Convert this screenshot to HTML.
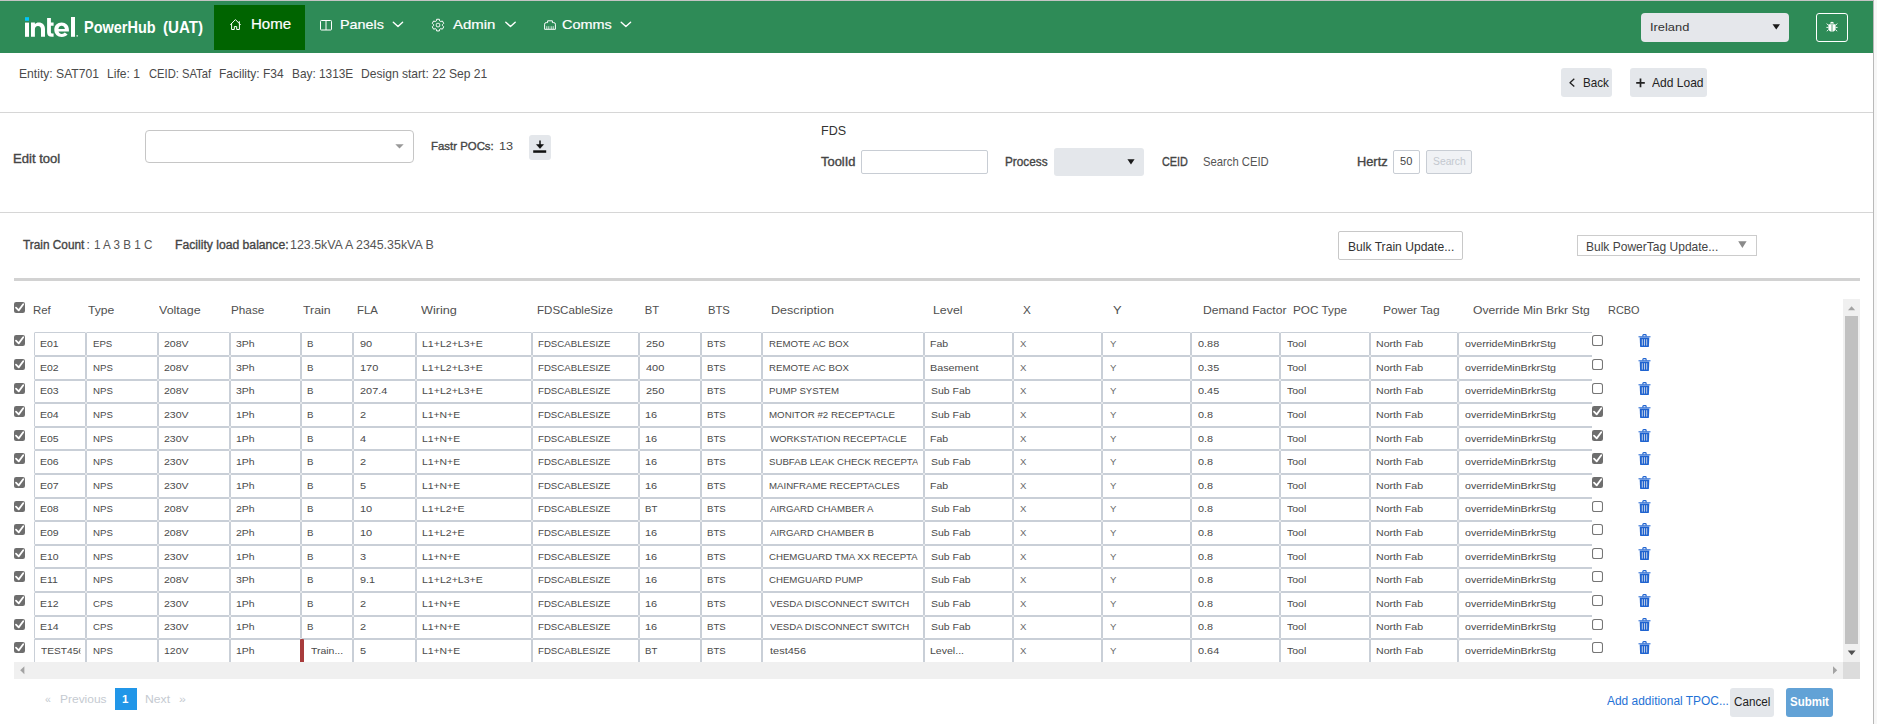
<!DOCTYPE html>
<html><head><meta charset="utf-8">
<style>
html,body{margin:0;padding:0;}
body{width:1877px;height:724px;overflow:hidden;position:relative;background:#fff;font-family:"Liberation Sans",sans-serif;}
.a{position:absolute;box-sizing:border-box;}
.t{position:absolute;white-space:pre;line-height:1;transform-origin:0 0;}
.cell{position:absolute;box-sizing:border-box;border:1px solid #c9cfd7;border-radius:1px;background:#fff;}
.cb{position:absolute;width:10.5px;height:10.5px;box-sizing:border-box;border-radius:2px;}
.cb.on{background:#6e6e6e;}
.cb.on::after{content:"";position:absolute;left:2.2px;top:4.6px;width:6px;height:3px;border-left:1.6px solid #fff;border-bottom:1.6px solid #fff;transform:rotate(-50deg);transform-origin:0 0;}
.cb.off{border:1px solid #767676;background:#fff;}
.ic{position:absolute;overflow:visible;}
</style></head><body>
<!-- page right edge -->
<div class="a" style="left:1873px;top:0;width:1px;height:724px;background:#b9b9b9"></div>
<div class="a" style="left:1874px;top:0;width:3px;height:724px;background:#f7f7f7"></div>
<!-- navbar -->
<div class="a" style="left:0;top:0;width:1873px;height:1px;background:#c4c4c4"></div>
<div class="a" style="left:0;top:1px;width:1873px;height:52px;background:#2e8b57"></div>
<div class="a" style="left:214px;top:5px;width:91px;height:45px;background:#006400"></div>
<svg class="ic" style="left:0;top:0" width="1877" height="60" viewBox="0 0 1877 60">
  <rect x="25" y="17.2" width="4" height="3.6" fill="#00c7fd"/>
  <g fill="#fff">
    <rect x="25" y="22.6" width="4" height="14.2"/>
    <path d="M31 36.8V22.6H34.9V24.1C35.8 23 37.1 22.4 38.7 22.4C42.6 22.4 45 24.9 45 28.9V36.8H41V29.5C41 27.2 40 25.9 38 25.9C36 25.9 34.9 27.3 34.9 29.5V36.8Z"/>
    <path d="M47.1 18.1H50.9V22.6H53.6V25.7H50.9V31.9C50.9 33.1 51.5 33.6 52.6 33.6H53.6V36.8H52C48.8 36.8 47.1 35.2 47.1 32.2Z"/>
    <path fill-rule="evenodd" d="M68.9 31.6H58.5C59 33.2 60.2 34 61.8 34C63 34 64 33.5 64.8 32.6L67.6 34.6C66.3 36 64.3 36.9 61.8 36.9C57.4 36.9 54.3 33.9 54.3 29.7C54.3 25.5 57.4 22.5 61.6 22.5C65.8 22.5 68.9 25.5 68.9 29.7ZM58.4 28.9H64.9C64.5 26.9 63.2 25.8 61.6 25.8C60 25.8 58.8 26.9 58.4 28.9Z"/>
    <rect x="71" y="17" width="4" height="19.8"/>
    <circle cx="77.2" cy="35.8" r="0.9" fill="#cfe3d6"/>
  </g>
  <g fill="none" stroke="#fff" stroke-width="1" stroke-linejoin="round">
    <!-- house -->
    <path d="M230.3 24.8L235.45 19.6L240.6 24.8M231.6 23.4V29.5H234.3V26.6H236.7V29.5H239.4V23.4M239.3 23.2V21.2" />
    <!-- panels -->
    <rect x="320.5" y="20.5" width="11" height="9.5" rx="0.8"/>
    <path d="M326 20.5V30"/>
    <!-- gear -->
    <path d="M436.21 21.08 L436.65 19.25 L439.35 19.25 L439.79 21.08 L440.59 21.54 L442.39 21.01 L443.74 23.35 L442.38 24.64 L442.38 25.56 L443.74 26.85 L442.39 29.19 L440.59 28.66 L439.79 29.12 L439.35 30.95 L436.65 30.95 L436.21 29.12 L435.41 28.66 L433.61 29.19 L432.26 26.85 L433.62 25.56 L433.62 24.64 L432.26 23.35 L433.61 21.01 L435.41 21.54Z" stroke-width="1"/>
    <rect x="436.3" y="23.4" width="3.4" height="3.4" rx="1"/>
    <!-- comms -->
    <path d="M544.6 29.3V24.2Q544.6 22.6 546.3 22.6H547.6V20.8H552.4V22.6H553.7Q555.4 22.6 555.4 24.2V29.3Z"/>
    <path d="M546.8 26.2V29M548.8 26.2V29M551.2 26.2V29M553.2 26.2V29" stroke-width="0.8"/>
  </g>
  <g fill="none" stroke="#fff" stroke-width="1.4" stroke-linecap="round" stroke-linejoin="round">
    <path d="M393.3 22.2L398 26.5L402.6 22.2"/>
    <path d="M505.8 22.2L510.5 26.5L515.2 22.2"/>
    <path d="M621.2 22.2L625.9 26.5L630.6 22.2"/>
  </g>
</svg>
<!-- Ireland select -->
<div class="a" style="left:1641px;top:13px;width:148px;height:29px;background:#e5e7eb;border-radius:4px"></div>
<svg class="ic" style="left:1771.5px;top:23.8px" width="9" height="6" viewBox="0 0 9 6"><path d="M0.5 0.3H8L4.25 5.4Z" fill="#1a1a1a"/></svg>
<!-- bug button -->
<div class="a" style="left:1816px;top:13px;width:32px;height:29px;border:1.3px solid #fff;border-radius:3px"></div>
<svg class="ic" style="left:1826px;top:21px" width="12" height="12" viewBox="0 0 12 12">
  <path d="M4 2.6Q4.3 0.8 6 0.8Q7.7 0.8 8 2.6Z" fill="#fff"/>
  <path d="M2.8 3.3H9.2Q9.6 3.3 9.6 3.8V7.2Q9.6 10.6 6 10.6Q2.4 10.6 2.4 7.2V3.8Q2.4 3.3 2.8 3.3Z" fill="#fff"/>
  <path d="M6 3.6V10.3" stroke="#2e8b57" stroke-width="0.8"/>
  <path d="M0.6 2.6L2.4 4.2M11.4 2.6L9.6 4.2M0.4 6.4H2.4M11.6 6.4H9.6M0.8 10.2L2.6 8.6M11.2 10.2L9.4 8.6" stroke="#fff" stroke-width="0.9"/>
</svg>
<!-- Back / Add Load -->
<div class="a" style="left:1561px;top:68px;width:51px;height:29px;background:#e4e7eb;border-radius:3px"></div>
<div class="a" style="left:1630px;top:68px;width:77px;height:29px;background:#e4e7eb;border-radius:3px"></div>
<svg class="ic" style="left:0;top:0" width="1877" height="100" viewBox="0 0 1877 100">
  <path d="M1574.3 78.8L1570 82.7L1574.3 86.6" fill="none" stroke="#222" stroke-width="1.3" stroke-linejoin="round"/>
  <path d="M1640.5 78.6V87.2M1636.2 82.9H1644.8" fill="none" stroke="#222" stroke-width="1.7"/>
</svg>
<!-- HR1 -->
<div class="a" style="left:0;top:112px;width:1873px;height:1px;background:#d6d6d6"></div>
<!-- edit select -->
<div class="a" style="left:145px;top:130px;width:269px;height:33px;border:1px solid #c6c6c6;border-radius:4px"></div>
<svg class="ic" style="left:395px;top:144px" width="9" height="5" viewBox="0 0 9 5"><path d="M0.3 0.2H8.7L4.5 4.4Z" fill="#999"/></svg>
<!-- download btn -->
<div class="a" style="left:529px;top:135px;width:22px;height:25px;background:#e4e7eb;border-radius:3px"></div>
<svg class="ic" style="left:0;top:0" width="1877" height="200" viewBox="0 0 1877 200">
  <path d="M540 140.6V147.6" stroke="#111" stroke-width="1.5"/>
  <path d="M536.5 144.6L540 148.4L543.5 144.6Z" fill="#111" stroke="#111" stroke-width="0.6"/>
  <rect x="533.2" y="150.3" width="13" height="2.5" fill="#111"/>
</svg>
<!-- ToolId input -->
<div class="a" style="left:861px;top:150px;width:127px;height:24px;border:1px solid #c8cdd4;border-radius:2px"></div>
<!-- process select -->
<div class="a" style="left:1054px;top:148px;width:90px;height:28px;background:#e4e7eb;border-radius:3px"></div>
<svg class="ic" style="left:1126.5px;top:158.8px" width="8" height="6" viewBox="0 0 8 6"><path d="M0.4 0.3H7.6L4 5.4Z" fill="#1a1a1a"/></svg>
<!-- hertz input / search -->
<div class="a" style="left:1393px;top:150px;width:27px;height:24px;border:1px solid #c8cdd4;border-radius:2px"></div>
<div class="a" style="left:1426px;top:150px;width:46px;height:24px;border:1px solid #c8cdd4;border-radius:2px;background:#f0f2f5"></div>
<!-- HR2 -->
<div class="a" style="left:0;top:212px;width:1873px;height:1px;background:#d6d6d6"></div>
<!-- bulk buttons -->
<div class="a" style="left:1338px;top:231px;width:125px;height:29px;border:1px solid #c8c8c8;border-radius:2px"></div>
<div class="a" style="left:1577px;top:235px;width:180px;height:21px;border:1px solid #cccccc"></div>
<svg class="ic" style="left:1737.8px;top:241.3px" width="9" height="8" viewBox="0 0 9 8"><path d="M0.2 0.2H8.6L4.4 7Z" fill="#8a8a8a"/></svg>
<!-- thick HR -->
<div class="a" style="left:14px;top:278px;width:1846px;height:3px;background:#d2d2d2"></div>
<!-- header checkbox -->
<svg class="ic" style="left:14px;top:302.4px" width="11" height="11" viewBox="0 0 10.5 10.5"><rect x="0" y="0" width="10.5" height="10.5" rx="2" fill="#6e6e6e"/><path d="M1.9 5.4L4.5 8L8.8 2.2" fill="none" stroke="#fff" stroke-width="1.7" stroke-linecap="round" stroke-linejoin="round"/></svg>
<div class=cell style="left:34px;top:332px;width:52.0px;height:24px;"></div>
<div class=cell style="left:86px;top:332px;width:72.0px;height:24px;"></div>
<div class=cell style="left:158px;top:332px;width:72.0px;height:24px;"></div>
<div class=cell style="left:230px;top:332px;width:71.0px;height:24px;"></div>
<div class=cell style="left:301px;top:332px;width:52.0px;height:24px;"></div>
<div class=cell style="left:353px;top:332px;width:63.0px;height:24px;"></div>
<div class=cell style="left:416px;top:332px;width:116.0px;height:24px;"></div>
<div class=cell style="left:532px;top:332px;width:107.0px;height:24px;"></div>
<div class=cell style="left:639px;top:332px;width:62.0px;height:24px;"></div>
<div class=cell style="left:701px;top:332px;width:61.0px;height:24px;"></div>
<div class=cell style="left:762px;top:332px;width:162.0px;height:24px;"></div>
<div class=cell style="left:924px;top:332px;width:89.0px;height:24px;"></div>
<div class=cell style="left:1013px;top:332px;width:89.0px;height:24px;"></div>
<div class=cell style="left:1102px;top:332px;width:89.0px;height:24px;"></div>
<div class=cell style="left:1191px;top:332px;width:89.0px;height:24px;"></div>
<div class=cell style="left:1280px;top:332px;width:90.0px;height:24px;"></div>
<div class=cell style="left:1370px;top:332px;width:88.0px;height:24px;"></div>
<div class=cell style="left:1458px;top:332px;width:134.4px;height:24px;border-right:none;border-radius:2px 0 0 2px;"></div>
<svg class=ic style="left:14px;top:335.20px" width=11 height=11 viewBox='0 0 10.5 10.5'><rect x='0' y='0' width='10.5' height='10.5' rx='2' fill='#6e6e6e'/><path d='M1.9 5.4L4.5 8L8.8 2.2' fill='none' stroke='#fff' stroke-width='1.7' stroke-linecap='round' stroke-linejoin='round'/></svg>
<svg class=ic style="left:1592.3px;top:334.60px" width=11 height=11 viewBox='0 0 10.5 10.5'><rect x='0.5' y='0.5' width='9.5' height='9.5' rx='2' fill='#fff' stroke='#767676' stroke-width='1'/></svg>
<svg class=ic style="left:1638px;top:333.80px" width=13 height=14 viewBox='0 0 13 14'><path d='M4.9 2.4V1.4Q4.9 0.7 5.6 0.7H7.4Q8.1 0.7 8.1 1.4V2.4' fill='none' stroke='#1f63d0' stroke-width='1.2'/><path d='M0.5 2.3H12.5V3.3H0.5Z' fill='#1f63d0'/><path d='M1.7 3.6H11.3L10.9 12.4Q10.8 13.1 10.1 13.1H2.9Q2.2 13.1 2.1 12.4Z' fill='#1f63d0'/><path d='M4.3 5.2V11.6M6.5 5.2V11.6M8.7 5.2V11.6' stroke='#f3f0ee' stroke-width='0.75'/></svg>
<div class=cell style="left:34px;top:356px;width:52.0px;height:24px;"></div>
<div class=cell style="left:86px;top:356px;width:72.0px;height:24px;"></div>
<div class=cell style="left:158px;top:356px;width:72.0px;height:24px;"></div>
<div class=cell style="left:230px;top:356px;width:71.0px;height:24px;"></div>
<div class=cell style="left:301px;top:356px;width:52.0px;height:24px;"></div>
<div class=cell style="left:353px;top:356px;width:63.0px;height:24px;"></div>
<div class=cell style="left:416px;top:356px;width:116.0px;height:24px;"></div>
<div class=cell style="left:532px;top:356px;width:107.0px;height:24px;"></div>
<div class=cell style="left:639px;top:356px;width:62.0px;height:24px;"></div>
<div class=cell style="left:701px;top:356px;width:61.0px;height:24px;"></div>
<div class=cell style="left:762px;top:356px;width:162.0px;height:24px;"></div>
<div class=cell style="left:924px;top:356px;width:89.0px;height:24px;"></div>
<div class=cell style="left:1013px;top:356px;width:89.0px;height:24px;"></div>
<div class=cell style="left:1102px;top:356px;width:89.0px;height:24px;"></div>
<div class=cell style="left:1191px;top:356px;width:89.0px;height:24px;"></div>
<div class=cell style="left:1280px;top:356px;width:90.0px;height:24px;"></div>
<div class=cell style="left:1370px;top:356px;width:88.0px;height:24px;"></div>
<div class=cell style="left:1458px;top:356px;width:134.4px;height:24px;border-right:none;border-radius:2px 0 0 2px;"></div>
<svg class=ic style="left:14px;top:359.20px" width=11 height=11 viewBox='0 0 10.5 10.5'><rect x='0' y='0' width='10.5' height='10.5' rx='2' fill='#6e6e6e'/><path d='M1.9 5.4L4.5 8L8.8 2.2' fill='none' stroke='#fff' stroke-width='1.7' stroke-linecap='round' stroke-linejoin='round'/></svg>
<svg class=ic style="left:1592.3px;top:358.60px" width=11 height=11 viewBox='0 0 10.5 10.5'><rect x='0.5' y='0.5' width='9.5' height='9.5' rx='2' fill='#fff' stroke='#767676' stroke-width='1'/></svg>
<svg class=ic style="left:1638px;top:357.80px" width=13 height=14 viewBox='0 0 13 14'><path d='M4.9 2.4V1.4Q4.9 0.7 5.6 0.7H7.4Q8.1 0.7 8.1 1.4V2.4' fill='none' stroke='#1f63d0' stroke-width='1.2'/><path d='M0.5 2.3H12.5V3.3H0.5Z' fill='#1f63d0'/><path d='M1.7 3.6H11.3L10.9 12.4Q10.8 13.1 10.1 13.1H2.9Q2.2 13.1 2.1 12.4Z' fill='#1f63d0'/><path d='M4.3 5.2V11.6M6.5 5.2V11.6M8.7 5.2V11.6' stroke='#f3f0ee' stroke-width='0.75'/></svg>
<div class=cell style="left:34px;top:380px;width:52.0px;height:23px;"></div>
<div class=cell style="left:86px;top:380px;width:72.0px;height:23px;"></div>
<div class=cell style="left:158px;top:380px;width:72.0px;height:23px;"></div>
<div class=cell style="left:230px;top:380px;width:71.0px;height:23px;"></div>
<div class=cell style="left:301px;top:380px;width:52.0px;height:23px;"></div>
<div class=cell style="left:353px;top:380px;width:63.0px;height:23px;"></div>
<div class=cell style="left:416px;top:380px;width:116.0px;height:23px;"></div>
<div class=cell style="left:532px;top:380px;width:107.0px;height:23px;"></div>
<div class=cell style="left:639px;top:380px;width:62.0px;height:23px;"></div>
<div class=cell style="left:701px;top:380px;width:61.0px;height:23px;"></div>
<div class=cell style="left:762px;top:380px;width:162.0px;height:23px;"></div>
<div class=cell style="left:924px;top:380px;width:89.0px;height:23px;"></div>
<div class=cell style="left:1013px;top:380px;width:89.0px;height:23px;"></div>
<div class=cell style="left:1102px;top:380px;width:89.0px;height:23px;"></div>
<div class=cell style="left:1191px;top:380px;width:89.0px;height:23px;"></div>
<div class=cell style="left:1280px;top:380px;width:90.0px;height:23px;"></div>
<div class=cell style="left:1370px;top:380px;width:88.0px;height:23px;"></div>
<div class=cell style="left:1458px;top:380px;width:134.4px;height:23px;border-right:none;border-radius:2px 0 0 2px;"></div>
<svg class=ic style="left:14px;top:383.20px" width=11 height=11 viewBox='0 0 10.5 10.5'><rect x='0' y='0' width='10.5' height='10.5' rx='2' fill='#6e6e6e'/><path d='M1.9 5.4L4.5 8L8.8 2.2' fill='none' stroke='#fff' stroke-width='1.7' stroke-linecap='round' stroke-linejoin='round'/></svg>
<svg class=ic style="left:1592.3px;top:382.60px" width=11 height=11 viewBox='0 0 10.5 10.5'><rect x='0.5' y='0.5' width='9.5' height='9.5' rx='2' fill='#fff' stroke='#767676' stroke-width='1'/></svg>
<svg class=ic style="left:1638px;top:381.80px" width=13 height=14 viewBox='0 0 13 14'><path d='M4.9 2.4V1.4Q4.9 0.7 5.6 0.7H7.4Q8.1 0.7 8.1 1.4V2.4' fill='none' stroke='#1f63d0' stroke-width='1.2'/><path d='M0.5 2.3H12.5V3.3H0.5Z' fill='#1f63d0'/><path d='M1.7 3.6H11.3L10.9 12.4Q10.8 13.1 10.1 13.1H2.9Q2.2 13.1 2.1 12.4Z' fill='#1f63d0'/><path d='M4.3 5.2V11.6M6.5 5.2V11.6M8.7 5.2V11.6' stroke='#f3f0ee' stroke-width='0.75'/></svg>
<div class=cell style="left:34px;top:403px;width:52.0px;height:24px;"></div>
<div class=cell style="left:86px;top:403px;width:72.0px;height:24px;"></div>
<div class=cell style="left:158px;top:403px;width:72.0px;height:24px;"></div>
<div class=cell style="left:230px;top:403px;width:71.0px;height:24px;"></div>
<div class=cell style="left:301px;top:403px;width:52.0px;height:24px;"></div>
<div class=cell style="left:353px;top:403px;width:63.0px;height:24px;"></div>
<div class=cell style="left:416px;top:403px;width:116.0px;height:24px;"></div>
<div class=cell style="left:532px;top:403px;width:107.0px;height:24px;"></div>
<div class=cell style="left:639px;top:403px;width:62.0px;height:24px;"></div>
<div class=cell style="left:701px;top:403px;width:61.0px;height:24px;"></div>
<div class=cell style="left:762px;top:403px;width:162.0px;height:24px;"></div>
<div class=cell style="left:924px;top:403px;width:89.0px;height:24px;"></div>
<div class=cell style="left:1013px;top:403px;width:89.0px;height:24px;"></div>
<div class=cell style="left:1102px;top:403px;width:89.0px;height:24px;"></div>
<div class=cell style="left:1191px;top:403px;width:89.0px;height:24px;"></div>
<div class=cell style="left:1280px;top:403px;width:90.0px;height:24px;"></div>
<div class=cell style="left:1370px;top:403px;width:88.0px;height:24px;"></div>
<div class=cell style="left:1458px;top:403px;width:134.4px;height:24px;border-right:none;border-radius:2px 0 0 2px;"></div>
<svg class=ic style="left:14px;top:406.20px" width=11 height=11 viewBox='0 0 10.5 10.5'><rect x='0' y='0' width='10.5' height='10.5' rx='2' fill='#6e6e6e'/><path d='M1.9 5.4L4.5 8L8.8 2.2' fill='none' stroke='#fff' stroke-width='1.7' stroke-linecap='round' stroke-linejoin='round'/></svg>
<svg class=ic style="left:1592.3px;top:405.60px" width=11 height=11 viewBox='0 0 10.5 10.5'><rect x='0' y='0' width='10.5' height='10.5' rx='2' fill='#6e6e6e'/><path d='M1.9 5.4L4.5 8L8.8 2.2' fill='none' stroke='#fff' stroke-width='1.7' stroke-linecap='round' stroke-linejoin='round'/></svg>
<svg class=ic style="left:1638px;top:404.80px" width=13 height=14 viewBox='0 0 13 14'><path d='M4.9 2.4V1.4Q4.9 0.7 5.6 0.7H7.4Q8.1 0.7 8.1 1.4V2.4' fill='none' stroke='#1f63d0' stroke-width='1.2'/><path d='M0.5 2.3H12.5V3.3H0.5Z' fill='#1f63d0'/><path d='M1.7 3.6H11.3L10.9 12.4Q10.8 13.1 10.1 13.1H2.9Q2.2 13.1 2.1 12.4Z' fill='#1f63d0'/><path d='M4.3 5.2V11.6M6.5 5.2V11.6M8.7 5.2V11.6' stroke='#f3f0ee' stroke-width='0.75'/></svg>
<div class=cell style="left:34px;top:427px;width:52.0px;height:23px;"></div>
<div class=cell style="left:86px;top:427px;width:72.0px;height:23px;"></div>
<div class=cell style="left:158px;top:427px;width:72.0px;height:23px;"></div>
<div class=cell style="left:230px;top:427px;width:71.0px;height:23px;"></div>
<div class=cell style="left:301px;top:427px;width:52.0px;height:23px;"></div>
<div class=cell style="left:353px;top:427px;width:63.0px;height:23px;"></div>
<div class=cell style="left:416px;top:427px;width:116.0px;height:23px;"></div>
<div class=cell style="left:532px;top:427px;width:107.0px;height:23px;"></div>
<div class=cell style="left:639px;top:427px;width:62.0px;height:23px;"></div>
<div class=cell style="left:701px;top:427px;width:61.0px;height:23px;"></div>
<div class=cell style="left:762px;top:427px;width:162.0px;height:23px;"></div>
<div class=cell style="left:924px;top:427px;width:89.0px;height:23px;"></div>
<div class=cell style="left:1013px;top:427px;width:89.0px;height:23px;"></div>
<div class=cell style="left:1102px;top:427px;width:89.0px;height:23px;"></div>
<div class=cell style="left:1191px;top:427px;width:89.0px;height:23px;"></div>
<div class=cell style="left:1280px;top:427px;width:90.0px;height:23px;"></div>
<div class=cell style="left:1370px;top:427px;width:88.0px;height:23px;"></div>
<div class=cell style="left:1458px;top:427px;width:134.4px;height:23px;border-right:none;border-radius:2px 0 0 2px;"></div>
<svg class=ic style="left:14px;top:430.20px" width=11 height=11 viewBox='0 0 10.5 10.5'><rect x='0' y='0' width='10.5' height='10.5' rx='2' fill='#6e6e6e'/><path d='M1.9 5.4L4.5 8L8.8 2.2' fill='none' stroke='#fff' stroke-width='1.7' stroke-linecap='round' stroke-linejoin='round'/></svg>
<svg class=ic style="left:1592.3px;top:429.60px" width=11 height=11 viewBox='0 0 10.5 10.5'><rect x='0' y='0' width='10.5' height='10.5' rx='2' fill='#6e6e6e'/><path d='M1.9 5.4L4.5 8L8.8 2.2' fill='none' stroke='#fff' stroke-width='1.7' stroke-linecap='round' stroke-linejoin='round'/></svg>
<svg class=ic style="left:1638px;top:428.80px" width=13 height=14 viewBox='0 0 13 14'><path d='M4.9 2.4V1.4Q4.9 0.7 5.6 0.7H7.4Q8.1 0.7 8.1 1.4V2.4' fill='none' stroke='#1f63d0' stroke-width='1.2'/><path d='M0.5 2.3H12.5V3.3H0.5Z' fill='#1f63d0'/><path d='M1.7 3.6H11.3L10.9 12.4Q10.8 13.1 10.1 13.1H2.9Q2.2 13.1 2.1 12.4Z' fill='#1f63d0'/><path d='M4.3 5.2V11.6M6.5 5.2V11.6M8.7 5.2V11.6' stroke='#f3f0ee' stroke-width='0.75'/></svg>
<div class=cell style="left:34px;top:450px;width:52.0px;height:24px;"></div>
<div class=cell style="left:86px;top:450px;width:72.0px;height:24px;"></div>
<div class=cell style="left:158px;top:450px;width:72.0px;height:24px;"></div>
<div class=cell style="left:230px;top:450px;width:71.0px;height:24px;"></div>
<div class=cell style="left:301px;top:450px;width:52.0px;height:24px;"></div>
<div class=cell style="left:353px;top:450px;width:63.0px;height:24px;"></div>
<div class=cell style="left:416px;top:450px;width:116.0px;height:24px;"></div>
<div class=cell style="left:532px;top:450px;width:107.0px;height:24px;"></div>
<div class=cell style="left:639px;top:450px;width:62.0px;height:24px;"></div>
<div class=cell style="left:701px;top:450px;width:61.0px;height:24px;"></div>
<div class=cell style="left:762px;top:450px;width:162.0px;height:24px;"></div>
<div class=cell style="left:924px;top:450px;width:89.0px;height:24px;"></div>
<div class=cell style="left:1013px;top:450px;width:89.0px;height:24px;"></div>
<div class=cell style="left:1102px;top:450px;width:89.0px;height:24px;"></div>
<div class=cell style="left:1191px;top:450px;width:89.0px;height:24px;"></div>
<div class=cell style="left:1280px;top:450px;width:90.0px;height:24px;"></div>
<div class=cell style="left:1370px;top:450px;width:88.0px;height:24px;"></div>
<div class=cell style="left:1458px;top:450px;width:134.4px;height:24px;border-right:none;border-radius:2px 0 0 2px;"></div>
<svg class=ic style="left:14px;top:453.20px" width=11 height=11 viewBox='0 0 10.5 10.5'><rect x='0' y='0' width='10.5' height='10.5' rx='2' fill='#6e6e6e'/><path d='M1.9 5.4L4.5 8L8.8 2.2' fill='none' stroke='#fff' stroke-width='1.7' stroke-linecap='round' stroke-linejoin='round'/></svg>
<svg class=ic style="left:1592.3px;top:452.60px" width=11 height=11 viewBox='0 0 10.5 10.5'><rect x='0' y='0' width='10.5' height='10.5' rx='2' fill='#6e6e6e'/><path d='M1.9 5.4L4.5 8L8.8 2.2' fill='none' stroke='#fff' stroke-width='1.7' stroke-linecap='round' stroke-linejoin='round'/></svg>
<svg class=ic style="left:1638px;top:451.80px" width=13 height=14 viewBox='0 0 13 14'><path d='M4.9 2.4V1.4Q4.9 0.7 5.6 0.7H7.4Q8.1 0.7 8.1 1.4V2.4' fill='none' stroke='#1f63d0' stroke-width='1.2'/><path d='M0.5 2.3H12.5V3.3H0.5Z' fill='#1f63d0'/><path d='M1.7 3.6H11.3L10.9 12.4Q10.8 13.1 10.1 13.1H2.9Q2.2 13.1 2.1 12.4Z' fill='#1f63d0'/><path d='M4.3 5.2V11.6M6.5 5.2V11.6M8.7 5.2V11.6' stroke='#f3f0ee' stroke-width='0.75'/></svg>
<div class=cell style="left:34px;top:474px;width:52.0px;height:24px;"></div>
<div class=cell style="left:86px;top:474px;width:72.0px;height:24px;"></div>
<div class=cell style="left:158px;top:474px;width:72.0px;height:24px;"></div>
<div class=cell style="left:230px;top:474px;width:71.0px;height:24px;"></div>
<div class=cell style="left:301px;top:474px;width:52.0px;height:24px;"></div>
<div class=cell style="left:353px;top:474px;width:63.0px;height:24px;"></div>
<div class=cell style="left:416px;top:474px;width:116.0px;height:24px;"></div>
<div class=cell style="left:532px;top:474px;width:107.0px;height:24px;"></div>
<div class=cell style="left:639px;top:474px;width:62.0px;height:24px;"></div>
<div class=cell style="left:701px;top:474px;width:61.0px;height:24px;"></div>
<div class=cell style="left:762px;top:474px;width:162.0px;height:24px;"></div>
<div class=cell style="left:924px;top:474px;width:89.0px;height:24px;"></div>
<div class=cell style="left:1013px;top:474px;width:89.0px;height:24px;"></div>
<div class=cell style="left:1102px;top:474px;width:89.0px;height:24px;"></div>
<div class=cell style="left:1191px;top:474px;width:89.0px;height:24px;"></div>
<div class=cell style="left:1280px;top:474px;width:90.0px;height:24px;"></div>
<div class=cell style="left:1370px;top:474px;width:88.0px;height:24px;"></div>
<div class=cell style="left:1458px;top:474px;width:134.4px;height:24px;border-right:none;border-radius:2px 0 0 2px;"></div>
<svg class=ic style="left:14px;top:477.20px" width=11 height=11 viewBox='0 0 10.5 10.5'><rect x='0' y='0' width='10.5' height='10.5' rx='2' fill='#6e6e6e'/><path d='M1.9 5.4L4.5 8L8.8 2.2' fill='none' stroke='#fff' stroke-width='1.7' stroke-linecap='round' stroke-linejoin='round'/></svg>
<svg class=ic style="left:1592.3px;top:476.60px" width=11 height=11 viewBox='0 0 10.5 10.5'><rect x='0' y='0' width='10.5' height='10.5' rx='2' fill='#6e6e6e'/><path d='M1.9 5.4L4.5 8L8.8 2.2' fill='none' stroke='#fff' stroke-width='1.7' stroke-linecap='round' stroke-linejoin='round'/></svg>
<svg class=ic style="left:1638px;top:475.80px" width=13 height=14 viewBox='0 0 13 14'><path d='M4.9 2.4V1.4Q4.9 0.7 5.6 0.7H7.4Q8.1 0.7 8.1 1.4V2.4' fill='none' stroke='#1f63d0' stroke-width='1.2'/><path d='M0.5 2.3H12.5V3.3H0.5Z' fill='#1f63d0'/><path d='M1.7 3.6H11.3L10.9 12.4Q10.8 13.1 10.1 13.1H2.9Q2.2 13.1 2.1 12.4Z' fill='#1f63d0'/><path d='M4.3 5.2V11.6M6.5 5.2V11.6M8.7 5.2V11.6' stroke='#f3f0ee' stroke-width='0.75'/></svg>
<div class=cell style="left:34px;top:498px;width:52.0px;height:23px;"></div>
<div class=cell style="left:86px;top:498px;width:72.0px;height:23px;"></div>
<div class=cell style="left:158px;top:498px;width:72.0px;height:23px;"></div>
<div class=cell style="left:230px;top:498px;width:71.0px;height:23px;"></div>
<div class=cell style="left:301px;top:498px;width:52.0px;height:23px;"></div>
<div class=cell style="left:353px;top:498px;width:63.0px;height:23px;"></div>
<div class=cell style="left:416px;top:498px;width:116.0px;height:23px;"></div>
<div class=cell style="left:532px;top:498px;width:107.0px;height:23px;"></div>
<div class=cell style="left:639px;top:498px;width:62.0px;height:23px;"></div>
<div class=cell style="left:701px;top:498px;width:61.0px;height:23px;"></div>
<div class=cell style="left:762px;top:498px;width:162.0px;height:23px;"></div>
<div class=cell style="left:924px;top:498px;width:89.0px;height:23px;"></div>
<div class=cell style="left:1013px;top:498px;width:89.0px;height:23px;"></div>
<div class=cell style="left:1102px;top:498px;width:89.0px;height:23px;"></div>
<div class=cell style="left:1191px;top:498px;width:89.0px;height:23px;"></div>
<div class=cell style="left:1280px;top:498px;width:90.0px;height:23px;"></div>
<div class=cell style="left:1370px;top:498px;width:88.0px;height:23px;"></div>
<div class=cell style="left:1458px;top:498px;width:134.4px;height:23px;border-right:none;border-radius:2px 0 0 2px;"></div>
<svg class=ic style="left:14px;top:501.20px" width=11 height=11 viewBox='0 0 10.5 10.5'><rect x='0' y='0' width='10.5' height='10.5' rx='2' fill='#6e6e6e'/><path d='M1.9 5.4L4.5 8L8.8 2.2' fill='none' stroke='#fff' stroke-width='1.7' stroke-linecap='round' stroke-linejoin='round'/></svg>
<svg class=ic style="left:1592.3px;top:500.60px" width=11 height=11 viewBox='0 0 10.5 10.5'><rect x='0.5' y='0.5' width='9.5' height='9.5' rx='2' fill='#fff' stroke='#767676' stroke-width='1'/></svg>
<svg class=ic style="left:1638px;top:499.80px" width=13 height=14 viewBox='0 0 13 14'><path d='M4.9 2.4V1.4Q4.9 0.7 5.6 0.7H7.4Q8.1 0.7 8.1 1.4V2.4' fill='none' stroke='#1f63d0' stroke-width='1.2'/><path d='M0.5 2.3H12.5V3.3H0.5Z' fill='#1f63d0'/><path d='M1.7 3.6H11.3L10.9 12.4Q10.8 13.1 10.1 13.1H2.9Q2.2 13.1 2.1 12.4Z' fill='#1f63d0'/><path d='M4.3 5.2V11.6M6.5 5.2V11.6M8.7 5.2V11.6' stroke='#f3f0ee' stroke-width='0.75'/></svg>
<div class=cell style="left:34px;top:521px;width:52.0px;height:24px;"></div>
<div class=cell style="left:86px;top:521px;width:72.0px;height:24px;"></div>
<div class=cell style="left:158px;top:521px;width:72.0px;height:24px;"></div>
<div class=cell style="left:230px;top:521px;width:71.0px;height:24px;"></div>
<div class=cell style="left:301px;top:521px;width:52.0px;height:24px;"></div>
<div class=cell style="left:353px;top:521px;width:63.0px;height:24px;"></div>
<div class=cell style="left:416px;top:521px;width:116.0px;height:24px;"></div>
<div class=cell style="left:532px;top:521px;width:107.0px;height:24px;"></div>
<div class=cell style="left:639px;top:521px;width:62.0px;height:24px;"></div>
<div class=cell style="left:701px;top:521px;width:61.0px;height:24px;"></div>
<div class=cell style="left:762px;top:521px;width:162.0px;height:24px;"></div>
<div class=cell style="left:924px;top:521px;width:89.0px;height:24px;"></div>
<div class=cell style="left:1013px;top:521px;width:89.0px;height:24px;"></div>
<div class=cell style="left:1102px;top:521px;width:89.0px;height:24px;"></div>
<div class=cell style="left:1191px;top:521px;width:89.0px;height:24px;"></div>
<div class=cell style="left:1280px;top:521px;width:90.0px;height:24px;"></div>
<div class=cell style="left:1370px;top:521px;width:88.0px;height:24px;"></div>
<div class=cell style="left:1458px;top:521px;width:134.4px;height:24px;border-right:none;border-radius:2px 0 0 2px;"></div>
<svg class=ic style="left:14px;top:524.20px" width=11 height=11 viewBox='0 0 10.5 10.5'><rect x='0' y='0' width='10.5' height='10.5' rx='2' fill='#6e6e6e'/><path d='M1.9 5.4L4.5 8L8.8 2.2' fill='none' stroke='#fff' stroke-width='1.7' stroke-linecap='round' stroke-linejoin='round'/></svg>
<svg class=ic style="left:1592.3px;top:523.60px" width=11 height=11 viewBox='0 0 10.5 10.5'><rect x='0.5' y='0.5' width='9.5' height='9.5' rx='2' fill='#fff' stroke='#767676' stroke-width='1'/></svg>
<svg class=ic style="left:1638px;top:522.80px" width=13 height=14 viewBox='0 0 13 14'><path d='M4.9 2.4V1.4Q4.9 0.7 5.6 0.7H7.4Q8.1 0.7 8.1 1.4V2.4' fill='none' stroke='#1f63d0' stroke-width='1.2'/><path d='M0.5 2.3H12.5V3.3H0.5Z' fill='#1f63d0'/><path d='M1.7 3.6H11.3L10.9 12.4Q10.8 13.1 10.1 13.1H2.9Q2.2 13.1 2.1 12.4Z' fill='#1f63d0'/><path d='M4.3 5.2V11.6M6.5 5.2V11.6M8.7 5.2V11.6' stroke='#f3f0ee' stroke-width='0.75'/></svg>
<div class=cell style="left:34px;top:545px;width:52.0px;height:23px;"></div>
<div class=cell style="left:86px;top:545px;width:72.0px;height:23px;"></div>
<div class=cell style="left:158px;top:545px;width:72.0px;height:23px;"></div>
<div class=cell style="left:230px;top:545px;width:71.0px;height:23px;"></div>
<div class=cell style="left:301px;top:545px;width:52.0px;height:23px;"></div>
<div class=cell style="left:353px;top:545px;width:63.0px;height:23px;"></div>
<div class=cell style="left:416px;top:545px;width:116.0px;height:23px;"></div>
<div class=cell style="left:532px;top:545px;width:107.0px;height:23px;"></div>
<div class=cell style="left:639px;top:545px;width:62.0px;height:23px;"></div>
<div class=cell style="left:701px;top:545px;width:61.0px;height:23px;"></div>
<div class=cell style="left:762px;top:545px;width:162.0px;height:23px;"></div>
<div class=cell style="left:924px;top:545px;width:89.0px;height:23px;"></div>
<div class=cell style="left:1013px;top:545px;width:89.0px;height:23px;"></div>
<div class=cell style="left:1102px;top:545px;width:89.0px;height:23px;"></div>
<div class=cell style="left:1191px;top:545px;width:89.0px;height:23px;"></div>
<div class=cell style="left:1280px;top:545px;width:90.0px;height:23px;"></div>
<div class=cell style="left:1370px;top:545px;width:88.0px;height:23px;"></div>
<div class=cell style="left:1458px;top:545px;width:134.4px;height:23px;border-right:none;border-radius:2px 0 0 2px;"></div>
<svg class=ic style="left:14px;top:548.20px" width=11 height=11 viewBox='0 0 10.5 10.5'><rect x='0' y='0' width='10.5' height='10.5' rx='2' fill='#6e6e6e'/><path d='M1.9 5.4L4.5 8L8.8 2.2' fill='none' stroke='#fff' stroke-width='1.7' stroke-linecap='round' stroke-linejoin='round'/></svg>
<svg class=ic style="left:1592.3px;top:547.60px" width=11 height=11 viewBox='0 0 10.5 10.5'><rect x='0.5' y='0.5' width='9.5' height='9.5' rx='2' fill='#fff' stroke='#767676' stroke-width='1'/></svg>
<svg class=ic style="left:1638px;top:546.80px" width=13 height=14 viewBox='0 0 13 14'><path d='M4.9 2.4V1.4Q4.9 0.7 5.6 0.7H7.4Q8.1 0.7 8.1 1.4V2.4' fill='none' stroke='#1f63d0' stroke-width='1.2'/><path d='M0.5 2.3H12.5V3.3H0.5Z' fill='#1f63d0'/><path d='M1.7 3.6H11.3L10.9 12.4Q10.8 13.1 10.1 13.1H2.9Q2.2 13.1 2.1 12.4Z' fill='#1f63d0'/><path d='M4.3 5.2V11.6M6.5 5.2V11.6M8.7 5.2V11.6' stroke='#f3f0ee' stroke-width='0.75'/></svg>
<div class=cell style="left:34px;top:568px;width:52.0px;height:24px;"></div>
<div class=cell style="left:86px;top:568px;width:72.0px;height:24px;"></div>
<div class=cell style="left:158px;top:568px;width:72.0px;height:24px;"></div>
<div class=cell style="left:230px;top:568px;width:71.0px;height:24px;"></div>
<div class=cell style="left:301px;top:568px;width:52.0px;height:24px;"></div>
<div class=cell style="left:353px;top:568px;width:63.0px;height:24px;"></div>
<div class=cell style="left:416px;top:568px;width:116.0px;height:24px;"></div>
<div class=cell style="left:532px;top:568px;width:107.0px;height:24px;"></div>
<div class=cell style="left:639px;top:568px;width:62.0px;height:24px;"></div>
<div class=cell style="left:701px;top:568px;width:61.0px;height:24px;"></div>
<div class=cell style="left:762px;top:568px;width:162.0px;height:24px;"></div>
<div class=cell style="left:924px;top:568px;width:89.0px;height:24px;"></div>
<div class=cell style="left:1013px;top:568px;width:89.0px;height:24px;"></div>
<div class=cell style="left:1102px;top:568px;width:89.0px;height:24px;"></div>
<div class=cell style="left:1191px;top:568px;width:89.0px;height:24px;"></div>
<div class=cell style="left:1280px;top:568px;width:90.0px;height:24px;"></div>
<div class=cell style="left:1370px;top:568px;width:88.0px;height:24px;"></div>
<div class=cell style="left:1458px;top:568px;width:134.4px;height:24px;border-right:none;border-radius:2px 0 0 2px;"></div>
<svg class=ic style="left:14px;top:571.20px" width=11 height=11 viewBox='0 0 10.5 10.5'><rect x='0' y='0' width='10.5' height='10.5' rx='2' fill='#6e6e6e'/><path d='M1.9 5.4L4.5 8L8.8 2.2' fill='none' stroke='#fff' stroke-width='1.7' stroke-linecap='round' stroke-linejoin='round'/></svg>
<svg class=ic style="left:1592.3px;top:570.60px" width=11 height=11 viewBox='0 0 10.5 10.5'><rect x='0.5' y='0.5' width='9.5' height='9.5' rx='2' fill='#fff' stroke='#767676' stroke-width='1'/></svg>
<svg class=ic style="left:1638px;top:569.80px" width=13 height=14 viewBox='0 0 13 14'><path d='M4.9 2.4V1.4Q4.9 0.7 5.6 0.7H7.4Q8.1 0.7 8.1 1.4V2.4' fill='none' stroke='#1f63d0' stroke-width='1.2'/><path d='M0.5 2.3H12.5V3.3H0.5Z' fill='#1f63d0'/><path d='M1.7 3.6H11.3L10.9 12.4Q10.8 13.1 10.1 13.1H2.9Q2.2 13.1 2.1 12.4Z' fill='#1f63d0'/><path d='M4.3 5.2V11.6M6.5 5.2V11.6M8.7 5.2V11.6' stroke='#f3f0ee' stroke-width='0.75'/></svg>
<div class=cell style="left:34px;top:592px;width:52.0px;height:24px;"></div>
<div class=cell style="left:86px;top:592px;width:72.0px;height:24px;"></div>
<div class=cell style="left:158px;top:592px;width:72.0px;height:24px;"></div>
<div class=cell style="left:230px;top:592px;width:71.0px;height:24px;"></div>
<div class=cell style="left:301px;top:592px;width:52.0px;height:24px;"></div>
<div class=cell style="left:353px;top:592px;width:63.0px;height:24px;"></div>
<div class=cell style="left:416px;top:592px;width:116.0px;height:24px;"></div>
<div class=cell style="left:532px;top:592px;width:107.0px;height:24px;"></div>
<div class=cell style="left:639px;top:592px;width:62.0px;height:24px;"></div>
<div class=cell style="left:701px;top:592px;width:61.0px;height:24px;"></div>
<div class=cell style="left:762px;top:592px;width:162.0px;height:24px;"></div>
<div class=cell style="left:924px;top:592px;width:89.0px;height:24px;"></div>
<div class=cell style="left:1013px;top:592px;width:89.0px;height:24px;"></div>
<div class=cell style="left:1102px;top:592px;width:89.0px;height:24px;"></div>
<div class=cell style="left:1191px;top:592px;width:89.0px;height:24px;"></div>
<div class=cell style="left:1280px;top:592px;width:90.0px;height:24px;"></div>
<div class=cell style="left:1370px;top:592px;width:88.0px;height:24px;"></div>
<div class=cell style="left:1458px;top:592px;width:134.4px;height:24px;border-right:none;border-radius:2px 0 0 2px;"></div>
<svg class=ic style="left:14px;top:595.20px" width=11 height=11 viewBox='0 0 10.5 10.5'><rect x='0' y='0' width='10.5' height='10.5' rx='2' fill='#6e6e6e'/><path d='M1.9 5.4L4.5 8L8.8 2.2' fill='none' stroke='#fff' stroke-width='1.7' stroke-linecap='round' stroke-linejoin='round'/></svg>
<svg class=ic style="left:1592.3px;top:594.60px" width=11 height=11 viewBox='0 0 10.5 10.5'><rect x='0.5' y='0.5' width='9.5' height='9.5' rx='2' fill='#fff' stroke='#767676' stroke-width='1'/></svg>
<svg class=ic style="left:1638px;top:593.80px" width=13 height=14 viewBox='0 0 13 14'><path d='M4.9 2.4V1.4Q4.9 0.7 5.6 0.7H7.4Q8.1 0.7 8.1 1.4V2.4' fill='none' stroke='#1f63d0' stroke-width='1.2'/><path d='M0.5 2.3H12.5V3.3H0.5Z' fill='#1f63d0'/><path d='M1.7 3.6H11.3L10.9 12.4Q10.8 13.1 10.1 13.1H2.9Q2.2 13.1 2.1 12.4Z' fill='#1f63d0'/><path d='M4.3 5.2V11.6M6.5 5.2V11.6M8.7 5.2V11.6' stroke='#f3f0ee' stroke-width='0.75'/></svg>
<div class=cell style="left:34px;top:616px;width:52.0px;height:23px;"></div>
<div class=cell style="left:86px;top:616px;width:72.0px;height:23px;"></div>
<div class=cell style="left:158px;top:616px;width:72.0px;height:23px;"></div>
<div class=cell style="left:230px;top:616px;width:71.0px;height:23px;"></div>
<div class=cell style="left:301px;top:616px;width:52.0px;height:23px;"></div>
<div class=cell style="left:353px;top:616px;width:63.0px;height:23px;"></div>
<div class=cell style="left:416px;top:616px;width:116.0px;height:23px;"></div>
<div class=cell style="left:532px;top:616px;width:107.0px;height:23px;"></div>
<div class=cell style="left:639px;top:616px;width:62.0px;height:23px;"></div>
<div class=cell style="left:701px;top:616px;width:61.0px;height:23px;"></div>
<div class=cell style="left:762px;top:616px;width:162.0px;height:23px;"></div>
<div class=cell style="left:924px;top:616px;width:89.0px;height:23px;"></div>
<div class=cell style="left:1013px;top:616px;width:89.0px;height:23px;"></div>
<div class=cell style="left:1102px;top:616px;width:89.0px;height:23px;"></div>
<div class=cell style="left:1191px;top:616px;width:89.0px;height:23px;"></div>
<div class=cell style="left:1280px;top:616px;width:90.0px;height:23px;"></div>
<div class=cell style="left:1370px;top:616px;width:88.0px;height:23px;"></div>
<div class=cell style="left:1458px;top:616px;width:134.4px;height:23px;border-right:none;border-radius:2px 0 0 2px;"></div>
<svg class=ic style="left:14px;top:619.20px" width=11 height=11 viewBox='0 0 10.5 10.5'><rect x='0' y='0' width='10.5' height='10.5' rx='2' fill='#6e6e6e'/><path d='M1.9 5.4L4.5 8L8.8 2.2' fill='none' stroke='#fff' stroke-width='1.7' stroke-linecap='round' stroke-linejoin='round'/></svg>
<svg class=ic style="left:1592.3px;top:618.60px" width=11 height=11 viewBox='0 0 10.5 10.5'><rect x='0.5' y='0.5' width='9.5' height='9.5' rx='2' fill='#fff' stroke='#767676' stroke-width='1'/></svg>
<svg class=ic style="left:1638px;top:617.80px" width=13 height=14 viewBox='0 0 13 14'><path d='M4.9 2.4V1.4Q4.9 0.7 5.6 0.7H7.4Q8.1 0.7 8.1 1.4V2.4' fill='none' stroke='#1f63d0' stroke-width='1.2'/><path d='M0.5 2.3H12.5V3.3H0.5Z' fill='#1f63d0'/><path d='M1.7 3.6H11.3L10.9 12.4Q10.8 13.1 10.1 13.1H2.9Q2.2 13.1 2.1 12.4Z' fill='#1f63d0'/><path d='M4.3 5.2V11.6M6.5 5.2V11.6M8.7 5.2V11.6' stroke='#f3f0ee' stroke-width='0.75'/></svg>
<div class=cell style="left:34px;top:639px;width:52.0px;height:24px;border-bottom:none;"></div>
<div class=cell style="left:86px;top:639px;width:72.0px;height:24px;border-bottom:none;"></div>
<div class=cell style="left:158px;top:639px;width:72.0px;height:24px;border-bottom:none;"></div>
<div class=cell style="left:230px;top:639px;width:71.0px;height:24px;border-bottom:none;"></div>
<div class=cell style="left:301px;top:639px;width:52.0px;height:24px;border-bottom:none;"></div>
<div class=cell style="left:353px;top:639px;width:63.0px;height:24px;border-bottom:none;"></div>
<div class=cell style="left:416px;top:639px;width:116.0px;height:24px;border-bottom:none;"></div>
<div class=cell style="left:532px;top:639px;width:107.0px;height:24px;border-bottom:none;"></div>
<div class=cell style="left:639px;top:639px;width:62.0px;height:24px;border-bottom:none;"></div>
<div class=cell style="left:701px;top:639px;width:61.0px;height:24px;border-bottom:none;"></div>
<div class=cell style="left:762px;top:639px;width:162.0px;height:24px;border-bottom:none;"></div>
<div class=cell style="left:924px;top:639px;width:89.0px;height:24px;border-bottom:none;"></div>
<div class=cell style="left:1013px;top:639px;width:89.0px;height:24px;border-bottom:none;"></div>
<div class=cell style="left:1102px;top:639px;width:89.0px;height:24px;border-bottom:none;"></div>
<div class=cell style="left:1191px;top:639px;width:89.0px;height:24px;border-bottom:none;"></div>
<div class=cell style="left:1280px;top:639px;width:90.0px;height:24px;border-bottom:none;"></div>
<div class=cell style="left:1370px;top:639px;width:88.0px;height:24px;border-bottom:none;"></div>
<div class=cell style="left:1458px;top:639px;width:134.4px;height:24px;border-right:none;border-radius:2px 0 0 2px;border-bottom:none;"></div>
<svg class=ic style="left:14px;top:642.20px" width=11 height=11 viewBox='0 0 10.5 10.5'><rect x='0' y='0' width='10.5' height='10.5' rx='2' fill='#6e6e6e'/><path d='M1.9 5.4L4.5 8L8.8 2.2' fill='none' stroke='#fff' stroke-width='1.7' stroke-linecap='round' stroke-linejoin='round'/></svg>
<svg class=ic style="left:1592.3px;top:641.60px" width=11 height=11 viewBox='0 0 10.5 10.5'><rect x='0.5' y='0.5' width='9.5' height='9.5' rx='2' fill='#fff' stroke='#767676' stroke-width='1'/></svg>
<svg class=ic style="left:1638px;top:640.80px" width=13 height=14 viewBox='0 0 13 14'><path d='M4.9 2.4V1.4Q4.9 0.7 5.6 0.7H7.4Q8.1 0.7 8.1 1.4V2.4' fill='none' stroke='#1f63d0' stroke-width='1.2'/><path d='M0.5 2.3H12.5V3.3H0.5Z' fill='#1f63d0'/><path d='M1.7 3.6H11.3L10.9 12.4Q10.8 13.1 10.1 13.1H2.9Q2.2 13.1 2.1 12.4Z' fill='#1f63d0'/><path d='M4.3 5.2V11.6M6.5 5.2V11.6M8.7 5.2V11.6' stroke='#f3f0ee' stroke-width='0.75'/></svg>
<!-- red marker -->
<div class="a" style="left:300px;top:639px;width:4px;height:23px;background:#a83c3c;border-radius:1px 1px 0 0"></div>
<!-- scrollbars -->
<div class="a" style="left:14px;top:662px;width:1829px;height:17px;background:#f0f0f0"></div>
<div class="a" style="left:1843px;top:299px;width:17px;height:363px;background:#f0f0f0"></div>
<div class="a" style="left:1843px;top:662px;width:17px;height:17px;background:#dcdcdc"></div>
<div class="a" style="left:1845px;top:316px;width:13px;height:328px;background:#c1c1c1"></div>
<svg class="ic" style="left:0;top:290px" width="1877" height="400" viewBox="0 290 1877 400">
  <path d="M1848 310.2H1855.2L1851.6 306.2Z" fill="#a3a3a3"/>
  <path d="M1847.8 650.6H1855.6L1851.7 655.2Z" fill="#505050"/>
  <path d="M24.4 666.3V674.3L20.2 670.3Z" fill="#a3a3a3"/>
  <path d="M1833 666.3V674.3L1837.2 670.3Z" fill="#a3a3a3"/>
</svg>
<!-- pagination -->
<div class="a" style="left:115px;top:688px;width:22px;height:22px;background:#2196e8"></div>
<!-- cancel/submit -->
<div class="a" style="left:1730px;top:688px;width:44px;height:29px;background:#e4e7eb;border-radius:3px"></div>
<div class="a" style="left:1786px;top:688px;width:47px;height:29px;background:#62a2d6;border-radius:3px"></div>
<div class=t style="left:84.31px;top:19.00px;font-size:16.3px;color:#fff;font-weight:700;transform:scaleX(0.8899);">PowerHub</div>
<div class=t style="left:163.06px;top:19.00px;font-size:16.3px;color:#fff;font-weight:700;transform:scaleX(0.9303);">(UAT)</div>
<div class=t style="left:251.23px;top:17.00px;font-size:14px;color:#fff;-webkit-text-stroke:0.2px currentColor;transform:scaleX(1.0726);">Home</div>
<div class=t style="left:340.35px;top:18.00px;font-size:13.6px;color:#fff;-webkit-text-stroke:0.2px currentColor;transform:scaleX(1.0547);">Panels</div>
<div class=t style="left:453.40px;top:18.00px;font-size:13.6px;color:#fff;-webkit-text-stroke:0.2px currentColor;transform:scaleX(1.1005);">Admin</div>
<div class=t style="left:561.76px;top:18.00px;font-size:13.6px;color:#fff;-webkit-text-stroke:0.2px currentColor;transform:scaleX(1.0611);">Comms</div>
<div class=t style="left:1649.70px;top:21.00px;font-size:11.7px;color:#333;transform:scaleX(1.1000);">Ireland</div>
<div class=t style="left:18.98px;top:69.00px;font-size:11.9px;color:#4a4a4a;transform:scaleX(1.0195);">Entity: SAT701</div>
<div class=t style="left:107.28px;top:69.00px;font-size:11.9px;color:#4a4a4a;transform:scaleX(1.0162);">Life: 1</div>
<div class=t style="left:148.83px;top:69.00px;font-size:11.9px;color:#4a4a4a;transform:scaleX(0.9419);">CEID: SATaf</div>
<div class=t style="left:219.09px;top:69.00px;font-size:11.9px;color:#4a4a4a;transform:scaleX(1.0080);">Facility: F34</div>
<div class=t style="left:291.90px;top:69.00px;font-size:11.9px;color:#4a4a4a;transform:scaleX(0.9967);">Bay: 1313E</div>
<div class=t style="left:361.18px;top:69.00px;font-size:11.9px;color:#4a4a4a;transform:scaleX(1.0163);">Design start: 22 Sep 21</div>
<div class=t style="left:1582.52px;top:78.00px;font-size:11.9px;color:#222;transform:scaleX(0.9803);">Back</div>
<div class=t style="left:1652.20px;top:78.00px;font-size:11.9px;color:#222;transform:scaleX(1.0120);">Add Load</div>
<div class=t style="left:12.63px;top:153.00px;font-size:12.2px;color:#454545;-webkit-text-stroke:0.35px currentColor;transform:scaleX(1.0735);">Edit tool</div>
<div class=t style="left:431.21px;top:140.00px;font-size:11.6px;color:#454545;-webkit-text-stroke:0.35px currentColor;transform:scaleX(0.9839);">Fastr POCs:</div>
<div class=t style="left:499.12px;top:140.00px;font-size:11.6px;color:#454545;transform:scaleX(1.0948);">13</div>
<div class=t style="left:820.67px;top:124.00px;font-size:13.5px;color:#333;transform:scaleX(0.9291);">FDS</div>
<div class=t style="left:820.78px;top:157.00px;font-size:11.9px;color:#454545;-webkit-text-stroke:0.35px currentColor;transform:scaleX(1.0877);">ToolId</div>
<div class=t style="left:1005.33px;top:156.00px;font-size:12.2px;color:#454545;-webkit-text-stroke:0.35px currentColor;transform:scaleX(0.9671);">Process</div>
<div class=t style="left:1161.87px;top:156.00px;font-size:12.2px;color:#454545;-webkit-text-stroke:0.35px currentColor;transform:scaleX(0.8893);">CEID</div>
<div class=t style="left:1203.15px;top:156.00px;font-size:12.2px;color:#555;transform:scaleX(0.9243);">Search CEID</div>
<div class=t style="left:1357.15px;top:156.00px;font-size:12.2px;color:#454545;-webkit-text-stroke:0.35px currentColor;transform:scaleX(1.0507);">Hertz</div>
<div class=t style="left:1400.36px;top:157.00px;font-size:10px;color:#444;transform:scaleX(1.1058);">50</div>
<div class=t style="left:1433.09px;top:157.00px;font-size:10px;color:#c3c8cf;transform:scaleX(1.0327);">Search</div>
<div class=t style="left:23.00px;top:239.00px;font-size:12px;color:#454545;-webkit-text-stroke:0.35px currentColor;transform:scaleX(0.9855);">Train Count</div>
<div class=t style="left:86.60px;top:239.00px;font-size:12px;color:#454545;">:</div>
<div class=t style="left:93.62px;top:239.00px;font-size:12px;color:#555;transform:scaleX(0.9711);">1 A 3 B 1 C</div>
<div class=t style="left:174.99px;top:239.00px;font-size:12px;color:#454545;-webkit-text-stroke:0.35px currentColor;transform:scaleX(1.0136);">Facility load balance:</div>
<div class=t style="left:290.17px;top:239.00px;font-size:12px;color:#555;transform:scaleX(1.0342);">123.5kVA A 2345.35kVA B</div>
<div class=t style="left:1347.58px;top:242.00px;font-size:11.9px;color:#333;transform:scaleX(1.0176);">Bulk Train Update...</div>
<div class=t style="left:1585.79px;top:242.00px;font-size:11.9px;color:#444;transform:scaleX(1.0109);">Bulk PowerTag Update...</div>
<div class=t style="left:33.09px;top:305.00px;font-size:11.3px;color:#505050;transform:scaleX(1.0119);">Ref</div>
<div class=t style="left:87.58px;top:305.00px;font-size:11.3px;color:#505050;transform:scaleX(1.0756);">Type</div>
<div class=t style="left:159.10px;top:305.00px;font-size:11.3px;color:#505050;transform:scaleX(1.1048);">Voltage</div>
<div class=t style="left:230.87px;top:305.00px;font-size:11.3px;color:#505050;transform:scaleX(1.0390);">Phase</div>
<div class=t style="left:303.38px;top:305.00px;font-size:11.3px;color:#505050;transform:scaleX(1.0902);">Train</div>
<div class=t style="left:357.19px;top:305.00px;font-size:11.3px;color:#505050;transform:scaleX(1.0100);">FLA</div>
<div class=t style="left:420.70px;top:305.00px;font-size:11.3px;color:#505050;transform:scaleX(1.1210);">Wiring</div>
<div class=t style="left:536.68px;top:305.00px;font-size:11.3px;color:#505050;transform:scaleX(1.0234);">FDSCableSize</div>
<div class=t style="left:644.80px;top:305.00px;font-size:11.3px;color:#505050;">BT</div>
<div class=t style="left:707.90px;top:305.00px;font-size:11.3px;color:#505050;">BTS</div>
<div class=t style="left:770.91px;top:305.00px;font-size:11.3px;color:#505050;transform:scaleX(1.1127);">Description</div>
<div class=t style="left:932.62px;top:305.00px;font-size:11.3px;color:#505050;transform:scaleX(1.0938);">Level</div>
<div class=t style="left:1023.29px;top:305.00px;font-size:11.3px;color:#505050;transform:scaleX(1.0429);">X</div>
<div class=t style="left:1112.77px;top:305.00px;font-size:11.3px;color:#505050;transform:scaleX(1.1429);">Y</div>
<div class=t style="left:1202.74px;top:305.00px;font-size:11.3px;color:#505050;transform:scaleX(1.0727);">Demand Factor</div>
<div class=t style="left:1292.97px;top:305.00px;font-size:11.3px;color:#505050;transform:scaleX(1.0415);">POC Type</div>
<div class=t style="left:1382.85px;top:305.00px;font-size:11.3px;color:#505050;transform:scaleX(1.0656);">Power Tag</div>
<div class=t style="left:1473.47px;top:305.00px;font-size:11.3px;color:#505050;transform:scaleX(1.0753);">Override Min Brkr Stg</div>
<div class=t style="left:1607.93px;top:305.00px;font-size:11.3px;color:#505050;transform:scaleX(0.9682);">RCBO</div>
<div class=t style="left:45.14px;top:694.00px;font-size:11.5px;color:#c5cad1;transform:scaleX(0.9107);">«</div>
<div class=t style="left:59.97px;top:694.00px;font-size:11.5px;color:#c5cad1;transform:scaleX(1.0413);">Previous</div>
<div class=t style="left:121.90px;top:694.00px;font-size:11.5px;color:#fff;font-weight:700;">1</div>
<div class=t style="left:144.85px;top:694.00px;font-size:11.5px;color:#c5cad1;transform:scaleX(1.0614);">Next</div>
<div class=t style="left:178.57px;top:694.00px;font-size:11.5px;color:#c5cad1;transform:scaleX(1.0714);">»</div>
<div class=t style="left:1606.50px;top:695.00px;font-size:12px;color:#1f72d6;transform:scaleX(0.9951);">Add additional TPOC...</div>
<div class=t style="left:1734.42px;top:696.00px;font-size:12px;color:#222;transform:scaleX(0.9722);">Cancel</div>
<div class=t style="left:1789.62px;top:696.00px;font-size:12px;color:#fff;font-weight:700;transform:scaleX(0.9577);">Submit</div>
<div class=t style="left:39.84px;top:339.00px;font-size:9.8px;color:#4a4a4a;transform:scaleX(1.0701);width:37.9px;overflow:hidden;">E01</div>
<div class=t style="left:92.81px;top:339.00px;font-size:9.8px;color:#4a4a4a;transform:scaleX(0.9850);width:59.7px;overflow:hidden;">EPS</div>
<div class=t style="left:164.37px;top:339.00px;font-size:9.8px;color:#4a4a4a;transform:scaleX(1.0776);width:55.1px;overflow:hidden;">208V</div>
<div class=t style="left:236.47px;top:339.00px;font-size:9.8px;color:#4a4a4a;transform:scaleX(1.0701);width:54.4px;overflow:hidden;">3Ph</div>
<div class=t style="left:307.11px;top:339.00px;font-size:9.8px;color:#4a4a4a;transform:scaleX(0.9850);width:40.9px;overflow:hidden;">B</div>
<div class=t style="left:360.15px;top:339.00px;font-size:9.8px;color:#4a4a4a;transform:scaleX(1.1200);width:44.2px;overflow:hidden;">90</div>
<div class=t style="left:421.94px;top:339.00px;font-size:9.8px;color:#4a4a4a;transform:scaleX(1.0767);width:96.3px;overflow:hidden;">L1+L2+L3+E</div>
<div class=t style="left:538.01px;top:339.00px;font-size:9.8px;color:#4a4a4a;transform:scaleX(0.9850);width:96.2px;overflow:hidden;">FDSCABLESIZE</div>
<div class=t style="left:645.55px;top:339.00px;font-size:9.8px;color:#4a4a4a;transform:scaleX(1.1200);width:43.8px;overflow:hidden;">250</div>
<div class=t style="left:707.01px;top:339.00px;font-size:9.8px;color:#4a4a4a;transform:scaleX(0.9850);width:50.2px;overflow:hidden;">BTS</div>
<div class=t style="left:768.91px;top:339.00px;font-size:9.8px;color:#4a4a4a;transform:scaleX(0.9850);width:151.3px;overflow:hidden;">REMOTE AC BOX</div>
<div class=t style="left:930.24px;top:339.00px;font-size:9.8px;color:#4a4a4a;transform:scaleX(1.0744);width:71.7px;overflow:hidden;">Fab</div>
<div class=t style="left:1020.30px;top:339.00px;font-size:9.8px;color:#6a6a6a;transform:scaleX(0.9850);width:77.4px;overflow:hidden;">X</div>
<div class=t style="left:1109.50px;top:339.00px;font-size:9.8px;color:#6a6a6a;transform:scaleX(0.9850);width:77.0px;overflow:hidden;">Y</div>
<div class=t style="left:1198.06px;top:339.00px;font-size:9.8px;color:#4a4a4a;transform:scaleX(1.1108);width:68.7px;overflow:hidden;">0.88</div>
<div class=t style="left:1287.39px;top:339.00px;font-size:9.8px;color:#4a4a4a;transform:scaleX(1.0723);width:71.2px;overflow:hidden;">Tool</div>
<div class=t style="left:1376.04px;top:339.00px;font-size:9.8px;color:#4a4a4a;transform:scaleX(1.0791);width:70.8px;overflow:hidden;">North Fab</div>
<div class=t style="left:1465.17px;top:339.00px;font-size:9.8px;color:#4a4a4a;transform:scaleX(1.0856);width:111.7px;overflow:hidden;">overrideMinBrkrStg</div>
<div class=t style="left:39.84px;top:363.00px;font-size:9.8px;color:#4a4a4a;transform:scaleX(1.0714);width:37.9px;overflow:hidden;">E02</div>
<div class=t style="left:92.81px;top:363.00px;font-size:9.8px;color:#4a4a4a;transform:scaleX(0.9850);width:59.7px;overflow:hidden;">NPS</div>
<div class=t style="left:164.37px;top:363.00px;font-size:9.8px;color:#4a4a4a;transform:scaleX(1.0776);width:55.1px;overflow:hidden;">208V</div>
<div class=t style="left:236.47px;top:363.00px;font-size:9.8px;color:#4a4a4a;transform:scaleX(1.0701);width:54.4px;overflow:hidden;">3Ph</div>
<div class=t style="left:307.11px;top:363.00px;font-size:9.8px;color:#4a4a4a;transform:scaleX(0.9850);width:40.9px;overflow:hidden;">B</div>
<div class=t style="left:359.93px;top:363.00px;font-size:9.8px;color:#4a4a4a;transform:scaleX(1.1200);width:44.4px;overflow:hidden;">170</div>
<div class=t style="left:421.94px;top:363.00px;font-size:9.8px;color:#4a4a4a;transform:scaleX(1.0767);width:96.3px;overflow:hidden;">L1+L2+L3+E</div>
<div class=t style="left:538.01px;top:363.00px;font-size:9.8px;color:#4a4a4a;transform:scaleX(0.9850);width:96.2px;overflow:hidden;">FDSCABLESIZE</div>
<div class=t style="left:645.78px;top:363.00px;font-size:9.8px;color:#4a4a4a;transform:scaleX(1.1200);width:43.6px;overflow:hidden;">400</div>
<div class=t style="left:707.01px;top:363.00px;font-size:9.8px;color:#4a4a4a;transform:scaleX(0.9850);width:50.2px;overflow:hidden;">BTS</div>
<div class=t style="left:768.91px;top:363.00px;font-size:9.8px;color:#4a4a4a;transform:scaleX(0.9850);width:151.3px;overflow:hidden;">REMOTE AC BOX</div>
<div class=t style="left:930.22px;top:363.00px;font-size:9.8px;color:#4a4a4a;transform:scaleX(1.1013);width:70.0px;overflow:hidden;">Basement</div>
<div class=t style="left:1020.30px;top:363.00px;font-size:9.8px;color:#6a6a6a;transform:scaleX(0.9850);width:77.4px;overflow:hidden;">X</div>
<div class=t style="left:1109.50px;top:363.00px;font-size:9.8px;color:#6a6a6a;transform:scaleX(0.9850);width:77.0px;overflow:hidden;">Y</div>
<div class=t style="left:1198.06px;top:363.00px;font-size:9.8px;color:#4a4a4a;transform:scaleX(1.1108);width:68.7px;overflow:hidden;">0.35</div>
<div class=t style="left:1287.39px;top:363.00px;font-size:9.8px;color:#4a4a4a;transform:scaleX(1.0723);width:71.2px;overflow:hidden;">Tool</div>
<div class=t style="left:1376.04px;top:363.00px;font-size:9.8px;color:#4a4a4a;transform:scaleX(1.0791);width:70.8px;overflow:hidden;">North Fab</div>
<div class=t style="left:1465.17px;top:363.00px;font-size:9.8px;color:#4a4a4a;transform:scaleX(1.0856);width:111.7px;overflow:hidden;">overrideMinBrkrStg</div>
<div class=t style="left:39.84px;top:386.00px;font-size:9.8px;color:#4a4a4a;transform:scaleX(1.0714);width:37.9px;overflow:hidden;">E03</div>
<div class=t style="left:92.81px;top:386.00px;font-size:9.8px;color:#4a4a4a;transform:scaleX(0.9850);width:59.7px;overflow:hidden;">NPS</div>
<div class=t style="left:164.37px;top:386.00px;font-size:9.8px;color:#4a4a4a;transform:scaleX(1.0776);width:55.1px;overflow:hidden;">208V</div>
<div class=t style="left:236.47px;top:386.00px;font-size:9.8px;color:#4a4a4a;transform:scaleX(1.0701);width:54.4px;overflow:hidden;">3Ph</div>
<div class=t style="left:307.11px;top:386.00px;font-size:9.8px;color:#4a4a4a;transform:scaleX(0.9850);width:40.9px;overflow:hidden;">B</div>
<div class=t style="left:360.15px;top:386.00px;font-size:9.8px;color:#4a4a4a;transform:scaleX(1.1131);width:44.4px;overflow:hidden;">207.4</div>
<div class=t style="left:421.94px;top:386.00px;font-size:9.8px;color:#4a4a4a;transform:scaleX(1.0767);width:96.3px;overflow:hidden;">L1+L2+L3+E</div>
<div class=t style="left:538.01px;top:386.00px;font-size:9.8px;color:#4a4a4a;transform:scaleX(0.9850);width:96.2px;overflow:hidden;">FDSCABLESIZE</div>
<div class=t style="left:645.55px;top:386.00px;font-size:9.8px;color:#4a4a4a;transform:scaleX(1.1200);width:43.8px;overflow:hidden;">250</div>
<div class=t style="left:707.01px;top:386.00px;font-size:9.8px;color:#4a4a4a;transform:scaleX(0.9850);width:50.2px;overflow:hidden;">BTS</div>
<div class=t style="left:768.91px;top:386.00px;font-size:9.8px;color:#4a4a4a;transform:scaleX(0.9850);width:151.3px;overflow:hidden;">PUMP SYSTEM</div>
<div class=t style="left:930.67px;top:386.00px;font-size:9.8px;color:#4a4a4a;transform:scaleX(1.0707);width:71.6px;overflow:hidden;">Sub Fab</div>
<div class=t style="left:1020.30px;top:386.00px;font-size:9.8px;color:#6a6a6a;transform:scaleX(0.9850);width:77.4px;overflow:hidden;">X</div>
<div class=t style="left:1109.50px;top:386.00px;font-size:9.8px;color:#6a6a6a;transform:scaleX(0.9850);width:77.0px;overflow:hidden;">Y</div>
<div class=t style="left:1198.06px;top:386.00px;font-size:9.8px;color:#4a4a4a;transform:scaleX(1.1110);width:68.7px;overflow:hidden;">0.45</div>
<div class=t style="left:1287.39px;top:386.00px;font-size:9.8px;color:#4a4a4a;transform:scaleX(1.0723);width:71.2px;overflow:hidden;">Tool</div>
<div class=t style="left:1376.04px;top:386.00px;font-size:9.8px;color:#4a4a4a;transform:scaleX(1.0791);width:70.8px;overflow:hidden;">North Fab</div>
<div class=t style="left:1465.17px;top:386.00px;font-size:9.8px;color:#4a4a4a;transform:scaleX(1.0856);width:111.7px;overflow:hidden;">overrideMinBrkrStg</div>
<div class=t style="left:39.84px;top:410.00px;font-size:9.8px;color:#4a4a4a;transform:scaleX(1.0727);width:37.8px;overflow:hidden;">E04</div>
<div class=t style="left:92.81px;top:410.00px;font-size:9.8px;color:#4a4a4a;transform:scaleX(0.9850);width:59.7px;overflow:hidden;">NPS</div>
<div class=t style="left:164.37px;top:410.00px;font-size:9.8px;color:#4a4a4a;transform:scaleX(1.0776);width:55.1px;overflow:hidden;">230V</div>
<div class=t style="left:236.26px;top:410.00px;font-size:9.8px;color:#4a4a4a;transform:scaleX(1.0687);width:54.7px;overflow:hidden;">1Ph</div>
<div class=t style="left:307.11px;top:410.00px;font-size:9.8px;color:#4a4a4a;transform:scaleX(0.9850);width:40.9px;overflow:hidden;">B</div>
<div class=t style="left:360.15px;top:410.00px;font-size:9.8px;color:#4a4a4a;transform:scaleX(1.1200);width:44.2px;overflow:hidden;">2</div>
<div class=t style="left:421.95px;top:410.00px;font-size:9.8px;color:#4a4a4a;transform:scaleX(1.0603);width:97.8px;overflow:hidden;">L1+N+E</div>
<div class=t style="left:538.01px;top:410.00px;font-size:9.8px;color:#4a4a4a;transform:scaleX(0.9850);width:96.2px;overflow:hidden;">FDSCABLESIZE</div>
<div class=t style="left:645.33px;top:410.00px;font-size:9.8px;color:#4a4a4a;transform:scaleX(1.1200);width:44.0px;overflow:hidden;">16</div>
<div class=t style="left:707.01px;top:410.00px;font-size:9.8px;color:#4a4a4a;transform:scaleX(0.9850);width:50.2px;overflow:hidden;">BTS</div>
<div class=t style="left:768.91px;top:410.00px;font-size:9.8px;color:#4a4a4a;transform:scaleX(0.9918);width:150.2px;overflow:hidden;">MONITOR #2 RECEPTACLE</div>
<div class=t style="left:930.67px;top:410.00px;font-size:9.8px;color:#4a4a4a;transform:scaleX(1.0707);width:71.6px;overflow:hidden;">Sub Fab</div>
<div class=t style="left:1020.30px;top:410.00px;font-size:9.8px;color:#6a6a6a;transform:scaleX(0.9850);width:77.4px;overflow:hidden;">X</div>
<div class=t style="left:1109.50px;top:410.00px;font-size:9.8px;color:#6a6a6a;transform:scaleX(0.9850);width:77.0px;overflow:hidden;">Y</div>
<div class=t style="left:1198.06px;top:410.00px;font-size:9.8px;color:#4a4a4a;transform:scaleX(1.1067);width:69.0px;overflow:hidden;">0.8</div>
<div class=t style="left:1287.39px;top:410.00px;font-size:9.8px;color:#4a4a4a;transform:scaleX(1.0723);width:71.2px;overflow:hidden;">Tool</div>
<div class=t style="left:1376.04px;top:410.00px;font-size:9.8px;color:#4a4a4a;transform:scaleX(1.0791);width:70.8px;overflow:hidden;">North Fab</div>
<div class=t style="left:1465.17px;top:410.00px;font-size:9.8px;color:#4a4a4a;transform:scaleX(1.0856);width:111.7px;overflow:hidden;">overrideMinBrkrStg</div>
<div class=t style="left:39.84px;top:434.00px;font-size:9.8px;color:#4a4a4a;transform:scaleX(1.0714);width:37.9px;overflow:hidden;">E05</div>
<div class=t style="left:92.81px;top:434.00px;font-size:9.8px;color:#4a4a4a;transform:scaleX(0.9850);width:59.7px;overflow:hidden;">NPS</div>
<div class=t style="left:164.37px;top:434.00px;font-size:9.8px;color:#4a4a4a;transform:scaleX(1.0776);width:55.1px;overflow:hidden;">230V</div>
<div class=t style="left:236.26px;top:434.00px;font-size:9.8px;color:#4a4a4a;transform:scaleX(1.0687);width:54.7px;overflow:hidden;">1Ph</div>
<div class=t style="left:307.11px;top:434.00px;font-size:9.8px;color:#4a4a4a;transform:scaleX(0.9850);width:40.9px;overflow:hidden;">B</div>
<div class=t style="left:360.38px;top:434.00px;font-size:9.8px;color:#4a4a4a;transform:scaleX(1.1200);width:44.0px;overflow:hidden;">4</div>
<div class=t style="left:421.95px;top:434.00px;font-size:9.8px;color:#4a4a4a;transform:scaleX(1.0603);width:97.8px;overflow:hidden;">L1+N+E</div>
<div class=t style="left:538.01px;top:434.00px;font-size:9.8px;color:#4a4a4a;transform:scaleX(0.9850);width:96.2px;overflow:hidden;">FDSCABLESIZE</div>
<div class=t style="left:645.33px;top:434.00px;font-size:9.8px;color:#4a4a4a;transform:scaleX(1.1200);width:44.0px;overflow:hidden;">16</div>
<div class=t style="left:707.01px;top:434.00px;font-size:9.8px;color:#4a4a4a;transform:scaleX(0.9850);width:50.2px;overflow:hidden;">BTS</div>
<div class=t style="left:769.70px;top:434.00px;font-size:9.8px;color:#4a4a4a;transform:scaleX(0.9850);width:150.5px;overflow:hidden;">WORKSTATION RECEPTACLE</div>
<div class=t style="left:930.24px;top:434.00px;font-size:9.8px;color:#4a4a4a;transform:scaleX(1.0744);width:71.7px;overflow:hidden;">Fab</div>
<div class=t style="left:1020.30px;top:434.00px;font-size:9.8px;color:#6a6a6a;transform:scaleX(0.9850);width:77.4px;overflow:hidden;">X</div>
<div class=t style="left:1109.50px;top:434.00px;font-size:9.8px;color:#6a6a6a;transform:scaleX(0.9850);width:77.0px;overflow:hidden;">Y</div>
<div class=t style="left:1198.06px;top:434.00px;font-size:9.8px;color:#4a4a4a;transform:scaleX(1.1067);width:69.0px;overflow:hidden;">0.8</div>
<div class=t style="left:1287.39px;top:434.00px;font-size:9.8px;color:#4a4a4a;transform:scaleX(1.0723);width:71.2px;overflow:hidden;">Tool</div>
<div class=t style="left:1376.04px;top:434.00px;font-size:9.8px;color:#4a4a4a;transform:scaleX(1.0791);width:70.8px;overflow:hidden;">North Fab</div>
<div class=t style="left:1465.17px;top:434.00px;font-size:9.8px;color:#4a4a4a;transform:scaleX(1.0856);width:111.7px;overflow:hidden;">overrideMinBrkrStg</div>
<div class=t style="left:39.84px;top:457.00px;font-size:9.8px;color:#4a4a4a;transform:scaleX(1.0714);width:37.9px;overflow:hidden;">E06</div>
<div class=t style="left:92.81px;top:457.00px;font-size:9.8px;color:#4a4a4a;transform:scaleX(0.9850);width:59.7px;overflow:hidden;">NPS</div>
<div class=t style="left:164.37px;top:457.00px;font-size:9.8px;color:#4a4a4a;transform:scaleX(1.0776);width:55.1px;overflow:hidden;">230V</div>
<div class=t style="left:236.26px;top:457.00px;font-size:9.8px;color:#4a4a4a;transform:scaleX(1.0687);width:54.7px;overflow:hidden;">1Ph</div>
<div class=t style="left:307.11px;top:457.00px;font-size:9.8px;color:#4a4a4a;transform:scaleX(0.9850);width:40.9px;overflow:hidden;">B</div>
<div class=t style="left:360.15px;top:457.00px;font-size:9.8px;color:#4a4a4a;transform:scaleX(1.1200);width:44.2px;overflow:hidden;">2</div>
<div class=t style="left:421.95px;top:457.00px;font-size:9.8px;color:#4a4a4a;transform:scaleX(1.0603);width:97.8px;overflow:hidden;">L1+N+E</div>
<div class=t style="left:538.01px;top:457.00px;font-size:9.8px;color:#4a4a4a;transform:scaleX(0.9850);width:96.2px;overflow:hidden;">FDSCABLESIZE</div>
<div class=t style="left:645.33px;top:457.00px;font-size:9.8px;color:#4a4a4a;transform:scaleX(1.1200);width:44.0px;overflow:hidden;">16</div>
<div class=t style="left:707.01px;top:457.00px;font-size:9.8px;color:#4a4a4a;transform:scaleX(0.9850);width:50.2px;overflow:hidden;">BTS</div>
<div class=t style="left:769.31px;top:457.00px;font-size:9.8px;color:#4a4a4a;transform:scaleX(0.9850);width:150.9px;overflow:hidden;">SUBFAB LEAK CHECK RECEPTA</div>
<div class=t style="left:930.67px;top:457.00px;font-size:9.8px;color:#4a4a4a;transform:scaleX(1.0707);width:71.6px;overflow:hidden;">Sub Fab</div>
<div class=t style="left:1020.30px;top:457.00px;font-size:9.8px;color:#6a6a6a;transform:scaleX(0.9850);width:77.4px;overflow:hidden;">X</div>
<div class=t style="left:1109.50px;top:457.00px;font-size:9.8px;color:#6a6a6a;transform:scaleX(0.9850);width:77.0px;overflow:hidden;">Y</div>
<div class=t style="left:1198.06px;top:457.00px;font-size:9.8px;color:#4a4a4a;transform:scaleX(1.1067);width:69.0px;overflow:hidden;">0.8</div>
<div class=t style="left:1287.39px;top:457.00px;font-size:9.8px;color:#4a4a4a;transform:scaleX(1.0723);width:71.2px;overflow:hidden;">Tool</div>
<div class=t style="left:1376.04px;top:457.00px;font-size:9.8px;color:#4a4a4a;transform:scaleX(1.0791);width:70.8px;overflow:hidden;">North Fab</div>
<div class=t style="left:1465.17px;top:457.00px;font-size:9.8px;color:#4a4a4a;transform:scaleX(1.0856);width:111.7px;overflow:hidden;">overrideMinBrkrStg</div>
<div class=t style="left:39.84px;top:481.00px;font-size:9.8px;color:#4a4a4a;transform:scaleX(1.0714);width:37.9px;overflow:hidden;">E07</div>
<div class=t style="left:92.81px;top:481.00px;font-size:9.8px;color:#4a4a4a;transform:scaleX(0.9850);width:59.7px;overflow:hidden;">NPS</div>
<div class=t style="left:164.37px;top:481.00px;font-size:9.8px;color:#4a4a4a;transform:scaleX(1.0776);width:55.1px;overflow:hidden;">230V</div>
<div class=t style="left:236.26px;top:481.00px;font-size:9.8px;color:#4a4a4a;transform:scaleX(1.0687);width:54.7px;overflow:hidden;">1Ph</div>
<div class=t style="left:307.11px;top:481.00px;font-size:9.8px;color:#4a4a4a;transform:scaleX(0.9850);width:40.9px;overflow:hidden;">B</div>
<div class=t style="left:360.15px;top:481.00px;font-size:9.8px;color:#4a4a4a;transform:scaleX(1.1200);width:44.2px;overflow:hidden;">5</div>
<div class=t style="left:421.95px;top:481.00px;font-size:9.8px;color:#4a4a4a;transform:scaleX(1.0603);width:97.8px;overflow:hidden;">L1+N+E</div>
<div class=t style="left:538.01px;top:481.00px;font-size:9.8px;color:#4a4a4a;transform:scaleX(0.9850);width:96.2px;overflow:hidden;">FDSCABLESIZE</div>
<div class=t style="left:645.33px;top:481.00px;font-size:9.8px;color:#4a4a4a;transform:scaleX(1.1200);width:44.0px;overflow:hidden;">16</div>
<div class=t style="left:707.01px;top:481.00px;font-size:9.8px;color:#4a4a4a;transform:scaleX(0.9850);width:50.2px;overflow:hidden;">BTS</div>
<div class=t style="left:768.91px;top:481.00px;font-size:9.8px;color:#4a4a4a;transform:scaleX(0.9850);width:151.3px;overflow:hidden;">MAINFRAME RECEPTACLES</div>
<div class=t style="left:930.24px;top:481.00px;font-size:9.8px;color:#4a4a4a;transform:scaleX(1.0744);width:71.7px;overflow:hidden;">Fab</div>
<div class=t style="left:1020.30px;top:481.00px;font-size:9.8px;color:#6a6a6a;transform:scaleX(0.9850);width:77.4px;overflow:hidden;">X</div>
<div class=t style="left:1109.50px;top:481.00px;font-size:9.8px;color:#6a6a6a;transform:scaleX(0.9850);width:77.0px;overflow:hidden;">Y</div>
<div class=t style="left:1198.06px;top:481.00px;font-size:9.8px;color:#4a4a4a;transform:scaleX(1.1067);width:69.0px;overflow:hidden;">0.8</div>
<div class=t style="left:1287.39px;top:481.00px;font-size:9.8px;color:#4a4a4a;transform:scaleX(1.0723);width:71.2px;overflow:hidden;">Tool</div>
<div class=t style="left:1376.04px;top:481.00px;font-size:9.8px;color:#4a4a4a;transform:scaleX(1.0791);width:70.8px;overflow:hidden;">North Fab</div>
<div class=t style="left:1465.17px;top:481.00px;font-size:9.8px;color:#4a4a4a;transform:scaleX(1.0856);width:111.7px;overflow:hidden;">overrideMinBrkrStg</div>
<div class=t style="left:39.84px;top:504.00px;font-size:9.8px;color:#4a4a4a;transform:scaleX(1.0714);width:37.9px;overflow:hidden;">E08</div>
<div class=t style="left:92.81px;top:504.00px;font-size:9.8px;color:#4a4a4a;transform:scaleX(0.9850);width:59.7px;overflow:hidden;">NPS</div>
<div class=t style="left:164.37px;top:504.00px;font-size:9.8px;color:#4a4a4a;transform:scaleX(1.0776);width:55.1px;overflow:hidden;">208V</div>
<div class=t style="left:236.47px;top:504.00px;font-size:9.8px;color:#4a4a4a;transform:scaleX(1.0701);width:54.4px;overflow:hidden;">2Ph</div>
<div class=t style="left:307.11px;top:504.00px;font-size:9.8px;color:#4a4a4a;transform:scaleX(0.9850);width:40.9px;overflow:hidden;">B</div>
<div class=t style="left:359.93px;top:504.00px;font-size:9.8px;color:#4a4a4a;transform:scaleX(1.1200);width:44.4px;overflow:hidden;">10</div>
<div class=t style="left:421.94px;top:504.00px;font-size:9.8px;color:#4a4a4a;transform:scaleX(1.0716);width:96.7px;overflow:hidden;">L1+L2+E</div>
<div class=t style="left:538.01px;top:504.00px;font-size:9.8px;color:#4a4a4a;transform:scaleX(0.9850);width:96.2px;overflow:hidden;">FDSCABLESIZE</div>
<div class=t style="left:645.21px;top:504.00px;font-size:9.8px;color:#4a4a4a;transform:scaleX(0.9850);width:50.1px;overflow:hidden;">BT</div>
<div class=t style="left:707.01px;top:504.00px;font-size:9.8px;color:#4a4a4a;transform:scaleX(0.9850);width:50.2px;overflow:hidden;">BTS</div>
<div class=t style="left:769.70px;top:504.00px;font-size:9.8px;color:#4a4a4a;transform:scaleX(0.9850);width:150.5px;overflow:hidden;">AIRGARD CHAMBER A</div>
<div class=t style="left:930.67px;top:504.00px;font-size:9.8px;color:#4a4a4a;transform:scaleX(1.0707);width:71.6px;overflow:hidden;">Sub Fab</div>
<div class=t style="left:1020.30px;top:504.00px;font-size:9.8px;color:#6a6a6a;transform:scaleX(0.9850);width:77.4px;overflow:hidden;">X</div>
<div class=t style="left:1109.50px;top:504.00px;font-size:9.8px;color:#6a6a6a;transform:scaleX(0.9850);width:77.0px;overflow:hidden;">Y</div>
<div class=t style="left:1198.06px;top:504.00px;font-size:9.8px;color:#4a4a4a;transform:scaleX(1.1067);width:69.0px;overflow:hidden;">0.8</div>
<div class=t style="left:1287.39px;top:504.00px;font-size:9.8px;color:#4a4a4a;transform:scaleX(1.0723);width:71.2px;overflow:hidden;">Tool</div>
<div class=t style="left:1376.04px;top:504.00px;font-size:9.8px;color:#4a4a4a;transform:scaleX(1.0791);width:70.8px;overflow:hidden;">North Fab</div>
<div class=t style="left:1465.17px;top:504.00px;font-size:9.8px;color:#4a4a4a;transform:scaleX(1.0856);width:111.7px;overflow:hidden;">overrideMinBrkrStg</div>
<div class=t style="left:39.84px;top:528.00px;font-size:9.8px;color:#4a4a4a;transform:scaleX(1.0714);width:37.9px;overflow:hidden;">E09</div>
<div class=t style="left:92.81px;top:528.00px;font-size:9.8px;color:#4a4a4a;transform:scaleX(0.9850);width:59.7px;overflow:hidden;">NPS</div>
<div class=t style="left:164.37px;top:528.00px;font-size:9.8px;color:#4a4a4a;transform:scaleX(1.0776);width:55.1px;overflow:hidden;">208V</div>
<div class=t style="left:236.47px;top:528.00px;font-size:9.8px;color:#4a4a4a;transform:scaleX(1.0701);width:54.4px;overflow:hidden;">2Ph</div>
<div class=t style="left:307.11px;top:528.00px;font-size:9.8px;color:#4a4a4a;transform:scaleX(0.9850);width:40.9px;overflow:hidden;">B</div>
<div class=t style="left:359.93px;top:528.00px;font-size:9.8px;color:#4a4a4a;transform:scaleX(1.1200);width:44.4px;overflow:hidden;">10</div>
<div class=t style="left:421.94px;top:528.00px;font-size:9.8px;color:#4a4a4a;transform:scaleX(1.0716);width:96.7px;overflow:hidden;">L1+L2+E</div>
<div class=t style="left:538.01px;top:528.00px;font-size:9.8px;color:#4a4a4a;transform:scaleX(0.9850);width:96.2px;overflow:hidden;">FDSCABLESIZE</div>
<div class=t style="left:645.33px;top:528.00px;font-size:9.8px;color:#4a4a4a;transform:scaleX(1.1200);width:44.0px;overflow:hidden;">16</div>
<div class=t style="left:707.01px;top:528.00px;font-size:9.8px;color:#4a4a4a;transform:scaleX(0.9850);width:50.2px;overflow:hidden;">BTS</div>
<div class=t style="left:769.70px;top:528.00px;font-size:9.8px;color:#4a4a4a;transform:scaleX(0.9850);width:150.5px;overflow:hidden;">AIRGARD CHAMBER B</div>
<div class=t style="left:930.67px;top:528.00px;font-size:9.8px;color:#4a4a4a;transform:scaleX(1.0707);width:71.6px;overflow:hidden;">Sub Fab</div>
<div class=t style="left:1020.30px;top:528.00px;font-size:9.8px;color:#6a6a6a;transform:scaleX(0.9850);width:77.4px;overflow:hidden;">X</div>
<div class=t style="left:1109.50px;top:528.00px;font-size:9.8px;color:#6a6a6a;transform:scaleX(0.9850);width:77.0px;overflow:hidden;">Y</div>
<div class=t style="left:1198.06px;top:528.00px;font-size:9.8px;color:#4a4a4a;transform:scaleX(1.1067);width:69.0px;overflow:hidden;">0.8</div>
<div class=t style="left:1287.39px;top:528.00px;font-size:9.8px;color:#4a4a4a;transform:scaleX(1.0723);width:71.2px;overflow:hidden;">Tool</div>
<div class=t style="left:1376.04px;top:528.00px;font-size:9.8px;color:#4a4a4a;transform:scaleX(1.0791);width:70.8px;overflow:hidden;">North Fab</div>
<div class=t style="left:1465.17px;top:528.00px;font-size:9.8px;color:#4a4a4a;transform:scaleX(1.0856);width:111.7px;overflow:hidden;">overrideMinBrkrStg</div>
<div class=t style="left:39.84px;top:552.00px;font-size:9.8px;color:#4a4a4a;transform:scaleX(1.0701);width:37.9px;overflow:hidden;">E10</div>
<div class=t style="left:92.81px;top:552.00px;font-size:9.8px;color:#4a4a4a;transform:scaleX(0.9850);width:59.7px;overflow:hidden;">NPS</div>
<div class=t style="left:164.37px;top:552.00px;font-size:9.8px;color:#4a4a4a;transform:scaleX(1.0776);width:55.1px;overflow:hidden;">230V</div>
<div class=t style="left:236.26px;top:552.00px;font-size:9.8px;color:#4a4a4a;transform:scaleX(1.0687);width:54.7px;overflow:hidden;">1Ph</div>
<div class=t style="left:307.11px;top:552.00px;font-size:9.8px;color:#4a4a4a;transform:scaleX(0.9850);width:40.9px;overflow:hidden;">B</div>
<div class=t style="left:360.15px;top:552.00px;font-size:9.8px;color:#4a4a4a;transform:scaleX(1.1200);width:44.2px;overflow:hidden;">3</div>
<div class=t style="left:421.95px;top:552.00px;font-size:9.8px;color:#4a4a4a;transform:scaleX(1.0603);width:97.8px;overflow:hidden;">L1+N+E</div>
<div class=t style="left:538.01px;top:552.00px;font-size:9.8px;color:#4a4a4a;transform:scaleX(0.9850);width:96.2px;overflow:hidden;">FDSCABLESIZE</div>
<div class=t style="left:645.33px;top:552.00px;font-size:9.8px;color:#4a4a4a;transform:scaleX(1.1200);width:44.0px;overflow:hidden;">16</div>
<div class=t style="left:707.01px;top:552.00px;font-size:9.8px;color:#4a4a4a;transform:scaleX(0.9850);width:50.2px;overflow:hidden;">BTS</div>
<div class=t style="left:769.31px;top:552.00px;font-size:9.8px;color:#4a4a4a;transform:scaleX(0.9850);width:150.9px;overflow:hidden;">CHEMGUARD TMA XX RECEPTA</div>
<div class=t style="left:930.67px;top:552.00px;font-size:9.8px;color:#4a4a4a;transform:scaleX(1.0707);width:71.6px;overflow:hidden;">Sub Fab</div>
<div class=t style="left:1020.30px;top:552.00px;font-size:9.8px;color:#6a6a6a;transform:scaleX(0.9850);width:77.4px;overflow:hidden;">X</div>
<div class=t style="left:1109.50px;top:552.00px;font-size:9.8px;color:#6a6a6a;transform:scaleX(0.9850);width:77.0px;overflow:hidden;">Y</div>
<div class=t style="left:1198.06px;top:552.00px;font-size:9.8px;color:#4a4a4a;transform:scaleX(1.1067);width:69.0px;overflow:hidden;">0.8</div>
<div class=t style="left:1287.39px;top:552.00px;font-size:9.8px;color:#4a4a4a;transform:scaleX(1.0723);width:71.2px;overflow:hidden;">Tool</div>
<div class=t style="left:1376.04px;top:552.00px;font-size:9.8px;color:#4a4a4a;transform:scaleX(1.0791);width:70.8px;overflow:hidden;">North Fab</div>
<div class=t style="left:1465.17px;top:552.00px;font-size:9.8px;color:#4a4a4a;transform:scaleX(1.0856);width:111.7px;overflow:hidden;">overrideMinBrkrStg</div>
<div class=t style="left:39.85px;top:575.00px;font-size:9.8px;color:#4a4a4a;transform:scaleX(1.0687);width:37.9px;overflow:hidden;">E11</div>
<div class=t style="left:92.81px;top:575.00px;font-size:9.8px;color:#4a4a4a;transform:scaleX(0.9850);width:59.7px;overflow:hidden;">NPS</div>
<div class=t style="left:164.37px;top:575.00px;font-size:9.8px;color:#4a4a4a;transform:scaleX(1.0776);width:55.1px;overflow:hidden;">208V</div>
<div class=t style="left:236.47px;top:575.00px;font-size:9.8px;color:#4a4a4a;transform:scaleX(1.0701);width:54.4px;overflow:hidden;">3Ph</div>
<div class=t style="left:307.11px;top:575.00px;font-size:9.8px;color:#4a4a4a;transform:scaleX(0.9850);width:40.9px;overflow:hidden;">B</div>
<div class=t style="left:360.16px;top:575.00px;font-size:9.8px;color:#4a4a4a;transform:scaleX(1.1062);width:44.7px;overflow:hidden;">9.1</div>
<div class=t style="left:421.94px;top:575.00px;font-size:9.8px;color:#4a4a4a;transform:scaleX(1.0767);width:96.3px;overflow:hidden;">L1+L2+L3+E</div>
<div class=t style="left:538.01px;top:575.00px;font-size:9.8px;color:#4a4a4a;transform:scaleX(0.9850);width:96.2px;overflow:hidden;">FDSCABLESIZE</div>
<div class=t style="left:645.33px;top:575.00px;font-size:9.8px;color:#4a4a4a;transform:scaleX(1.1200);width:44.0px;overflow:hidden;">16</div>
<div class=t style="left:707.01px;top:575.00px;font-size:9.8px;color:#4a4a4a;transform:scaleX(0.9850);width:50.2px;overflow:hidden;">BTS</div>
<div class=t style="left:769.31px;top:575.00px;font-size:9.8px;color:#4a4a4a;transform:scaleX(0.9850);width:150.9px;overflow:hidden;">CHEMGUARD PUMP</div>
<div class=t style="left:930.67px;top:575.00px;font-size:9.8px;color:#4a4a4a;transform:scaleX(1.0707);width:71.6px;overflow:hidden;">Sub Fab</div>
<div class=t style="left:1020.30px;top:575.00px;font-size:9.8px;color:#6a6a6a;transform:scaleX(0.9850);width:77.4px;overflow:hidden;">X</div>
<div class=t style="left:1109.50px;top:575.00px;font-size:9.8px;color:#6a6a6a;transform:scaleX(0.9850);width:77.0px;overflow:hidden;">Y</div>
<div class=t style="left:1198.06px;top:575.00px;font-size:9.8px;color:#4a4a4a;transform:scaleX(1.1067);width:69.0px;overflow:hidden;">0.8</div>
<div class=t style="left:1287.39px;top:575.00px;font-size:9.8px;color:#4a4a4a;transform:scaleX(1.0723);width:71.2px;overflow:hidden;">Tool</div>
<div class=t style="left:1376.04px;top:575.00px;font-size:9.8px;color:#4a4a4a;transform:scaleX(1.0791);width:70.8px;overflow:hidden;">North Fab</div>
<div class=t style="left:1465.17px;top:575.00px;font-size:9.8px;color:#4a4a4a;transform:scaleX(1.0856);width:111.7px;overflow:hidden;">overrideMinBrkrStg</div>
<div class=t style="left:39.84px;top:599.00px;font-size:9.8px;color:#4a4a4a;transform:scaleX(1.0701);width:37.9px;overflow:hidden;">E12</div>
<div class=t style="left:93.21px;top:599.00px;font-size:9.8px;color:#4a4a4a;transform:scaleX(0.9850);width:59.3px;overflow:hidden;">CPS</div>
<div class=t style="left:164.37px;top:599.00px;font-size:9.8px;color:#4a4a4a;transform:scaleX(1.0776);width:55.1px;overflow:hidden;">230V</div>
<div class=t style="left:236.26px;top:599.00px;font-size:9.8px;color:#4a4a4a;transform:scaleX(1.0687);width:54.7px;overflow:hidden;">1Ph</div>
<div class=t style="left:307.11px;top:599.00px;font-size:9.8px;color:#4a4a4a;transform:scaleX(0.9850);width:40.9px;overflow:hidden;">B</div>
<div class=t style="left:360.15px;top:599.00px;font-size:9.8px;color:#4a4a4a;transform:scaleX(1.1200);width:44.2px;overflow:hidden;">2</div>
<div class=t style="left:421.95px;top:599.00px;font-size:9.8px;color:#4a4a4a;transform:scaleX(1.0603);width:97.8px;overflow:hidden;">L1+N+E</div>
<div class=t style="left:538.01px;top:599.00px;font-size:9.8px;color:#4a4a4a;transform:scaleX(0.9850);width:96.2px;overflow:hidden;">FDSCABLESIZE</div>
<div class=t style="left:645.33px;top:599.00px;font-size:9.8px;color:#4a4a4a;transform:scaleX(1.1200);width:44.0px;overflow:hidden;">16</div>
<div class=t style="left:707.01px;top:599.00px;font-size:9.8px;color:#4a4a4a;transform:scaleX(0.9850);width:50.2px;overflow:hidden;">BTS</div>
<div class=t style="left:769.70px;top:599.00px;font-size:9.8px;color:#4a4a4a;transform:scaleX(0.9850);width:150.5px;overflow:hidden;">VESDA DISCONNECT SWITCH</div>
<div class=t style="left:930.67px;top:599.00px;font-size:9.8px;color:#4a4a4a;transform:scaleX(1.0707);width:71.6px;overflow:hidden;">Sub Fab</div>
<div class=t style="left:1020.30px;top:599.00px;font-size:9.8px;color:#6a6a6a;transform:scaleX(0.9850);width:77.4px;overflow:hidden;">X</div>
<div class=t style="left:1109.50px;top:599.00px;font-size:9.8px;color:#6a6a6a;transform:scaleX(0.9850);width:77.0px;overflow:hidden;">Y</div>
<div class=t style="left:1198.06px;top:599.00px;font-size:9.8px;color:#4a4a4a;transform:scaleX(1.1067);width:69.0px;overflow:hidden;">0.8</div>
<div class=t style="left:1287.39px;top:599.00px;font-size:9.8px;color:#4a4a4a;transform:scaleX(1.0723);width:71.2px;overflow:hidden;">Tool</div>
<div class=t style="left:1376.04px;top:599.00px;font-size:9.8px;color:#4a4a4a;transform:scaleX(1.0791);width:70.8px;overflow:hidden;">North Fab</div>
<div class=t style="left:1465.17px;top:599.00px;font-size:9.8px;color:#4a4a4a;transform:scaleX(1.0856);width:111.7px;overflow:hidden;">overrideMinBrkrStg</div>
<div class=t style="left:39.84px;top:622.00px;font-size:9.8px;color:#4a4a4a;transform:scaleX(1.0714);width:37.9px;overflow:hidden;">E14</div>
<div class=t style="left:93.21px;top:622.00px;font-size:9.8px;color:#4a4a4a;transform:scaleX(0.9850);width:59.3px;overflow:hidden;">CPS</div>
<div class=t style="left:164.37px;top:622.00px;font-size:9.8px;color:#4a4a4a;transform:scaleX(1.0776);width:55.1px;overflow:hidden;">230V</div>
<div class=t style="left:236.26px;top:622.00px;font-size:9.8px;color:#4a4a4a;transform:scaleX(1.0687);width:54.7px;overflow:hidden;">1Ph</div>
<div class=t style="left:307.11px;top:622.00px;font-size:9.8px;color:#4a4a4a;transform:scaleX(0.9850);width:40.9px;overflow:hidden;">B</div>
<div class=t style="left:360.15px;top:622.00px;font-size:9.8px;color:#4a4a4a;transform:scaleX(1.1200);width:44.2px;overflow:hidden;">2</div>
<div class=t style="left:421.95px;top:622.00px;font-size:9.8px;color:#4a4a4a;transform:scaleX(1.0603);width:97.8px;overflow:hidden;">L1+N+E</div>
<div class=t style="left:538.01px;top:622.00px;font-size:9.8px;color:#4a4a4a;transform:scaleX(0.9850);width:96.2px;overflow:hidden;">FDSCABLESIZE</div>
<div class=t style="left:645.33px;top:622.00px;font-size:9.8px;color:#4a4a4a;transform:scaleX(1.1200);width:44.0px;overflow:hidden;">16</div>
<div class=t style="left:707.01px;top:622.00px;font-size:9.8px;color:#4a4a4a;transform:scaleX(0.9850);width:50.2px;overflow:hidden;">BTS</div>
<div class=t style="left:769.70px;top:622.00px;font-size:9.8px;color:#4a4a4a;transform:scaleX(0.9850);width:150.5px;overflow:hidden;">VESDA DISCONNECT SWITCH</div>
<div class=t style="left:930.67px;top:622.00px;font-size:9.8px;color:#4a4a4a;transform:scaleX(1.0707);width:71.6px;overflow:hidden;">Sub Fab</div>
<div class=t style="left:1020.30px;top:622.00px;font-size:9.8px;color:#6a6a6a;transform:scaleX(0.9850);width:77.4px;overflow:hidden;">X</div>
<div class=t style="left:1109.50px;top:622.00px;font-size:9.8px;color:#6a6a6a;transform:scaleX(0.9850);width:77.0px;overflow:hidden;">Y</div>
<div class=t style="left:1198.06px;top:622.00px;font-size:9.8px;color:#4a4a4a;transform:scaleX(1.1067);width:69.0px;overflow:hidden;">0.8</div>
<div class=t style="left:1287.39px;top:622.00px;font-size:9.8px;color:#4a4a4a;transform:scaleX(1.0723);width:71.2px;overflow:hidden;">Tool</div>
<div class=t style="left:1376.04px;top:622.00px;font-size:9.8px;color:#4a4a4a;transform:scaleX(1.0791);width:70.8px;overflow:hidden;">North Fab</div>
<div class=t style="left:1465.17px;top:622.00px;font-size:9.8px;color:#4a4a4a;transform:scaleX(1.0856);width:111.7px;overflow:hidden;">overrideMinBrkrStg</div>
<div class=t style="left:40.69px;top:646.00px;font-size:9.8px;color:#4a4a4a;transform:scaleX(1.0381);width:38.0px;overflow:hidden;">TEST456</div>
<div class=t style="left:92.81px;top:646.00px;font-size:9.8px;color:#4a4a4a;transform:scaleX(0.9850);width:59.7px;overflow:hidden;">NPS</div>
<div class=t style="left:164.15px;top:646.00px;font-size:9.8px;color:#4a4a4a;transform:scaleX(1.0767);width:55.3px;overflow:hidden;">120V</div>
<div class=t style="left:236.26px;top:646.00px;font-size:9.8px;color:#4a4a4a;transform:scaleX(1.0687);width:54.7px;overflow:hidden;">1Ph</div>
<div class=t style="left:310.69px;top:646.00px;font-size:9.8px;color:#4a4a4a;transform:scaleX(1.0662);width:34.4px;overflow:hidden;">Train...</div>
<div class=t style="left:360.15px;top:646.00px;font-size:9.8px;color:#4a4a4a;transform:scaleX(1.1200);width:44.2px;overflow:hidden;">5</div>
<div class=t style="left:421.95px;top:646.00px;font-size:9.8px;color:#4a4a4a;transform:scaleX(1.0603);width:97.8px;overflow:hidden;">L1+N+E</div>
<div class=t style="left:538.01px;top:646.00px;font-size:9.8px;color:#4a4a4a;transform:scaleX(0.9850);width:96.2px;overflow:hidden;">FDSCABLESIZE</div>
<div class=t style="left:645.21px;top:646.00px;font-size:9.8px;color:#4a4a4a;transform:scaleX(0.9850);width:50.1px;overflow:hidden;">BT</div>
<div class=t style="left:707.01px;top:646.00px;font-size:9.8px;color:#4a4a4a;transform:scaleX(0.9850);width:50.2px;overflow:hidden;">BTS</div>
<div class=t style="left:769.70px;top:646.00px;font-size:9.8px;color:#4a4a4a;transform:scaleX(1.1200);width:132.3px;overflow:hidden;">test456</div>
<div class=t style="left:930.24px;top:646.00px;font-size:9.8px;color:#4a4a4a;transform:scaleX(1.0765);width:71.6px;overflow:hidden;">Level...</div>
<div class=t style="left:1020.30px;top:646.00px;font-size:9.8px;color:#6a6a6a;transform:scaleX(0.9850);width:77.4px;overflow:hidden;">X</div>
<div class=t style="left:1109.50px;top:646.00px;font-size:9.8px;color:#6a6a6a;transform:scaleX(0.9850);width:77.0px;overflow:hidden;">Y</div>
<div class=t style="left:1198.06px;top:646.00px;font-size:9.8px;color:#4a4a4a;transform:scaleX(1.1110);width:68.7px;overflow:hidden;">0.64</div>
<div class=t style="left:1287.39px;top:646.00px;font-size:9.8px;color:#4a4a4a;transform:scaleX(1.0723);width:71.2px;overflow:hidden;">Tool</div>
<div class=t style="left:1376.04px;top:646.00px;font-size:9.8px;color:#4a4a4a;transform:scaleX(1.0791);width:70.8px;overflow:hidden;">North Fab</div>
<div class=t style="left:1465.17px;top:646.00px;font-size:9.8px;color:#4a4a4a;transform:scaleX(1.0856);width:111.7px;overflow:hidden;">overrideMinBrkrStg</div>
</body></html>
